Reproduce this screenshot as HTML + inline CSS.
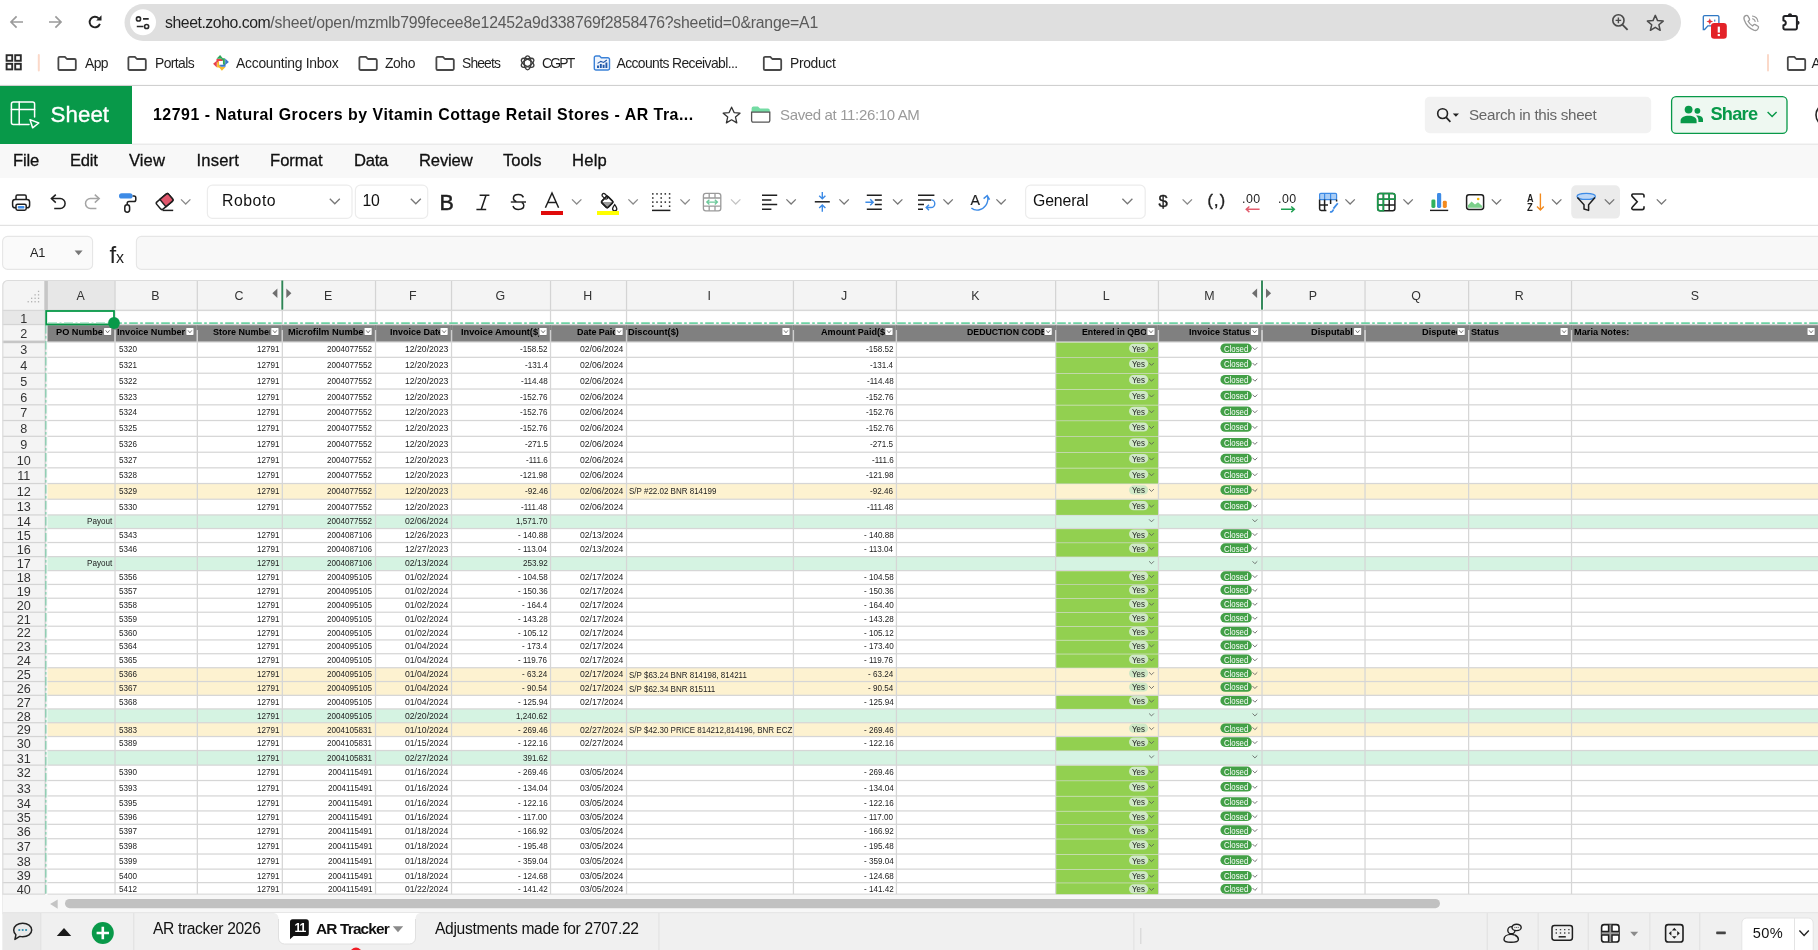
<!DOCTYPE html>
<html><head><meta charset="utf-8"><title>12791 - Natural Grocers by Vitamin Cottage Retail Stores - AR Tracker</title>
<style>
html,body{margin:0;padding:0;background:#fff}
body{width:1818px;height:950px;overflow:hidden;position:relative;font-family:"Liberation Sans",sans-serif}
.abs{position:absolute}
.t{position:absolute;white-space:pre;line-height:20px;display:block}
.clip{position:absolute;overflow:hidden}
svg{display:block}
</style></head><body>
<svg class="abs" style="left:0;top:0" width="1818" height="950" viewBox="0 0 1818 950"><rect x="47.5" y="310.0" width="1770.5" height="584.2" fill="#fff"/><path d="M7.5 280.2 h1818.0 v614.0 h-1823.0 v-609.0 a5 5 0 0 1 5 -5z" fill="#f4f4f4"/><rect x="47.5" y="310" width="1818" height="584.2" fill="#fff"/><rect x="47.5" y="280.2" width="67.5" height="29.8" fill="#e7e7e7"/><rect x="2.5" y="310" width="42.5" height="14.5" fill="#e7e7e7"/><rect x="47.5" y="483.50" width="1818" height="15.70" fill="#fdf2d0"/><rect x="47.5" y="514.90" width="1818" height="13.60" fill="#d5f3e2"/><rect x="47.5" y="556.60" width="1818" height="14.00" fill="#d5f3e2"/><rect x="47.5" y="667.70" width="1818" height="13.80" fill="#fdf2d0"/><rect x="47.5" y="681.50" width="1818" height="13.80" fill="#fdf2d0"/><rect x="47.5" y="708.90" width="1818" height="13.80" fill="#d5f3e2"/><rect x="47.5" y="722.70" width="1818" height="13.80" fill="#fdf2d0"/><rect x="47.5" y="750.50" width="1818" height="14.60" fill="#d5f3e2"/><rect x="47.5" y="325.10" width="1818" height="16.90" fill="#808080"/><rect x="47.5" y="309.80" width="1818" height="1.25" fill="#d6d6d6"/><rect x="47.5" y="323.90" width="1818" height="1.25" fill="#d6d6d6"/><rect x="47.5" y="341.40" width="1818" height="1.25" fill="#d6d6d6"/><rect x="47.5" y="356.70" width="1818" height="1.25" fill="#d6d6d6"/><rect x="47.5" y="372.60" width="1818" height="1.25" fill="#d6d6d6"/><rect x="47.5" y="388.40" width="1818" height="1.25" fill="#d6d6d6"/><rect x="47.5" y="404.20" width="1818" height="1.25" fill="#d6d6d6"/><rect x="47.5" y="419.90" width="1818" height="1.25" fill="#d6d6d6"/><rect x="47.5" y="435.70" width="1818" height="1.25" fill="#d6d6d6"/><rect x="47.5" y="451.60" width="1818" height="1.25" fill="#d6d6d6"/><rect x="47.5" y="467.20" width="1818" height="1.25" fill="#d6d6d6"/><rect x="47.5" y="482.90" width="1818" height="1.25" fill="#d6d6d6"/><rect x="47.5" y="498.60" width="1818" height="1.25" fill="#d6d6d6"/><rect x="47.5" y="514.30" width="1818" height="1.25" fill="#d6d6d6"/><rect x="47.5" y="527.90" width="1818" height="1.25" fill="#d6d6d6"/><rect x="47.5" y="541.90" width="1818" height="1.25" fill="#d6d6d6"/><rect x="47.5" y="556.00" width="1818" height="1.25" fill="#d6d6d6"/><rect x="47.5" y="570.00" width="1818" height="1.25" fill="#d6d6d6"/><rect x="47.5" y="583.80" width="1818" height="1.25" fill="#d6d6d6"/><rect x="47.5" y="597.60" width="1818" height="1.25" fill="#d6d6d6"/><rect x="47.5" y="611.60" width="1818" height="1.25" fill="#d6d6d6"/><rect x="47.5" y="625.60" width="1818" height="1.25" fill="#d6d6d6"/><rect x="47.5" y="639.30" width="1818" height="1.25" fill="#d6d6d6"/><rect x="47.5" y="653.10" width="1818" height="1.25" fill="#d6d6d6"/><rect x="47.5" y="667.10" width="1818" height="1.25" fill="#d6d6d6"/><rect x="47.5" y="680.90" width="1818" height="1.25" fill="#d6d6d6"/><rect x="47.5" y="694.70" width="1818" height="1.25" fill="#d6d6d6"/><rect x="47.5" y="708.30" width="1818" height="1.25" fill="#d6d6d6"/><rect x="47.5" y="722.10" width="1818" height="1.25" fill="#d6d6d6"/><rect x="47.5" y="735.90" width="1818" height="1.25" fill="#d6d6d6"/><rect x="47.5" y="749.90" width="1818" height="1.25" fill="#d6d6d6"/><rect x="47.5" y="764.50" width="1818" height="1.25" fill="#d6d6d6"/><rect x="47.5" y="779.90" width="1818" height="1.25" fill="#d6d6d6"/><rect x="47.5" y="795.30" width="1818" height="1.25" fill="#d6d6d6"/><rect x="47.5" y="810.30" width="1818" height="1.25" fill="#d6d6d6"/><rect x="47.5" y="823.70" width="1818" height="1.25" fill="#d6d6d6"/><rect x="47.5" y="838.10" width="1818" height="1.25" fill="#d6d6d6"/><rect x="47.5" y="853.40" width="1818" height="1.25" fill="#d6d6d6"/><rect x="47.5" y="868.50" width="1818" height="1.25" fill="#d6d6d6"/><rect x="47.5" y="882.00" width="1818" height="1.25" fill="#d6d6d6"/><rect x="47.5" y="893.60" width="1818" height="1.25" fill="#d6d6d6"/><rect x="114.40" y="310" width="1.25" height="584.2" fill="#d6d6d6"/><rect x="196.70" y="310" width="1.25" height="584.2" fill="#d6d6d6"/><rect x="281.70" y="310" width="1.25" height="584.2" fill="#d6d6d6"/><rect x="374.90" y="310" width="1.25" height="584.2" fill="#d6d6d6"/><rect x="450.90" y="310" width="1.25" height="584.2" fill="#d6d6d6"/><rect x="549.90" y="310" width="1.25" height="584.2" fill="#d6d6d6"/><rect x="625.90" y="310" width="1.25" height="584.2" fill="#d6d6d6"/><rect x="792.80" y="310" width="1.25" height="584.2" fill="#d6d6d6"/><rect x="895.80" y="310" width="1.25" height="584.2" fill="#d6d6d6"/><rect x="1055.00" y="310" width="1.25" height="584.2" fill="#d6d6d6"/><rect x="1157.80" y="310" width="1.25" height="584.2" fill="#d6d6d6"/><rect x="1261.40" y="310" width="1.25" height="584.2" fill="#d6d6d6"/><rect x="1364.40" y="310" width="1.25" height="584.2" fill="#d6d6d6"/><rect x="1468.00" y="310" width="1.25" height="584.2" fill="#d6d6d6"/><rect x="1570.90" y="310" width="1.25" height="584.2" fill="#d6d6d6"/><rect x="114.40" y="325.10" width="1.25" height="5.00" fill="#808080"/><rect x="114.40" y="330.10" width="1.25" height="11.90" fill="#cfcfcf"/><rect x="196.70" y="325.10" width="1.25" height="5.00" fill="#808080"/><rect x="196.70" y="330.10" width="1.25" height="11.90" fill="#cfcfcf"/><rect x="281.70" y="325.10" width="1.25" height="5.00" fill="#808080"/><rect x="281.70" y="330.10" width="1.25" height="11.90" fill="#cfcfcf"/><rect x="374.90" y="325.10" width="1.25" height="5.00" fill="#808080"/><rect x="374.90" y="330.10" width="1.25" height="11.90" fill="#cfcfcf"/><rect x="450.90" y="325.10" width="1.25" height="5.00" fill="#808080"/><rect x="450.90" y="330.10" width="1.25" height="11.90" fill="#cfcfcf"/><rect x="549.90" y="325.10" width="1.25" height="5.00" fill="#808080"/><rect x="549.90" y="330.10" width="1.25" height="11.90" fill="#cfcfcf"/><rect x="625.90" y="325.10" width="1.25" height="5.00" fill="#808080"/><rect x="625.90" y="330.10" width="1.25" height="11.90" fill="#cfcfcf"/><rect x="792.80" y="325.10" width="1.25" height="5.00" fill="#808080"/><rect x="792.80" y="330.10" width="1.25" height="11.90" fill="#cfcfcf"/><rect x="895.80" y="325.10" width="1.25" height="5.00" fill="#808080"/><rect x="895.80" y="330.10" width="1.25" height="11.90" fill="#cfcfcf"/><rect x="1055.00" y="325.10" width="1.25" height="5.00" fill="#808080"/><rect x="1055.00" y="330.10" width="1.25" height="11.90" fill="#cfcfcf"/><rect x="1157.80" y="325.10" width="1.25" height="5.00" fill="#808080"/><rect x="1157.80" y="330.10" width="1.25" height="11.90" fill="#cfcfcf"/><rect x="1261.40" y="325.10" width="1.25" height="5.00" fill="#808080"/><rect x="1261.40" y="330.10" width="1.25" height="11.90" fill="#cfcfcf"/><rect x="1364.40" y="325.10" width="1.25" height="5.00" fill="#808080"/><rect x="1364.40" y="330.10" width="1.25" height="11.90" fill="#cfcfcf"/><rect x="1468.00" y="325.10" width="1.25" height="5.00" fill="#808080"/><rect x="1468.00" y="330.10" width="1.25" height="11.90" fill="#cfcfcf"/><rect x="1570.90" y="325.10" width="1.25" height="5.00" fill="#808080"/><rect x="1570.90" y="330.10" width="1.25" height="11.90" fill="#cfcfcf"/><rect x="1056.20" y="342.60" width="101.80" height="14.70" fill="#92d050"/><rect x="1056.20" y="357.90" width="101.80" height="15.30" fill="#92d050"/><rect x="1056.20" y="373.80" width="101.80" height="15.20" fill="#92d050"/><rect x="1056.20" y="389.60" width="101.80" height="15.20" fill="#92d050"/><rect x="1056.20" y="405.40" width="101.80" height="15.10" fill="#92d050"/><rect x="1056.20" y="421.10" width="101.80" height="15.20" fill="#92d050"/><rect x="1056.20" y="436.90" width="101.80" height="15.30" fill="#92d050"/><rect x="1056.20" y="452.80" width="101.80" height="15.00" fill="#92d050"/><rect x="1056.20" y="468.40" width="101.80" height="15.10" fill="#92d050"/><rect x="1056.20" y="499.80" width="101.80" height="15.10" fill="#92d050"/><rect x="1056.20" y="529.10" width="101.80" height="13.40" fill="#92d050"/><rect x="1056.20" y="543.10" width="101.80" height="13.50" fill="#92d050"/><rect x="1056.20" y="571.20" width="101.80" height="13.20" fill="#92d050"/><rect x="1056.20" y="585.00" width="101.80" height="13.20" fill="#92d050"/><rect x="1056.20" y="598.80" width="101.80" height="13.40" fill="#92d050"/><rect x="1056.20" y="612.80" width="101.80" height="13.40" fill="#92d050"/><rect x="1056.20" y="626.80" width="101.80" height="13.10" fill="#92d050"/><rect x="1056.20" y="640.50" width="101.80" height="13.20" fill="#92d050"/><rect x="1056.20" y="654.30" width="101.80" height="13.40" fill="#92d050"/><rect x="1056.20" y="695.90" width="101.80" height="13.00" fill="#92d050"/><rect x="1056.20" y="737.10" width="101.80" height="13.40" fill="#92d050"/><rect x="1056.20" y="765.70" width="101.80" height="14.80" fill="#92d050"/><rect x="1056.20" y="781.10" width="101.80" height="14.80" fill="#92d050"/><rect x="1056.20" y="796.50" width="101.80" height="14.40" fill="#92d050"/><rect x="1056.20" y="811.50" width="101.80" height="12.80" fill="#92d050"/><rect x="1056.20" y="824.90" width="101.80" height="13.80" fill="#92d050"/><rect x="1056.20" y="839.30" width="101.80" height="14.70" fill="#92d050"/><rect x="1056.20" y="854.60" width="101.80" height="14.50" fill="#92d050"/><rect x="1056.20" y="869.70" width="101.80" height="12.90" fill="#92d050"/><rect x="1056.20" y="883.20" width="101.80" height="11.00" fill="#92d050"/><rect x="2.5" y="323.90" width="42.5" height="1.25" fill="#d4d4d4"/><rect x="2.5" y="341.40" width="42.5" height="1.25" fill="#d4d4d4"/><rect x="2.5" y="356.70" width="42.5" height="1.25" fill="#d4d4d4"/><rect x="2.5" y="372.60" width="42.5" height="1.25" fill="#d4d4d4"/><rect x="2.5" y="388.40" width="42.5" height="1.25" fill="#d4d4d4"/><rect x="2.5" y="404.20" width="42.5" height="1.25" fill="#d4d4d4"/><rect x="2.5" y="419.90" width="42.5" height="1.25" fill="#d4d4d4"/><rect x="2.5" y="435.70" width="42.5" height="1.25" fill="#d4d4d4"/><rect x="2.5" y="451.60" width="42.5" height="1.25" fill="#d4d4d4"/><rect x="2.5" y="467.20" width="42.5" height="1.25" fill="#d4d4d4"/><rect x="2.5" y="482.90" width="42.5" height="1.25" fill="#d4d4d4"/><rect x="2.5" y="498.60" width="42.5" height="1.25" fill="#d4d4d4"/><rect x="2.5" y="514.30" width="42.5" height="1.25" fill="#d4d4d4"/><rect x="2.5" y="527.90" width="42.5" height="1.25" fill="#d4d4d4"/><rect x="2.5" y="541.90" width="42.5" height="1.25" fill="#d4d4d4"/><rect x="2.5" y="556.00" width="42.5" height="1.25" fill="#d4d4d4"/><rect x="2.5" y="570.00" width="42.5" height="1.25" fill="#d4d4d4"/><rect x="2.5" y="583.80" width="42.5" height="1.25" fill="#d4d4d4"/><rect x="2.5" y="597.60" width="42.5" height="1.25" fill="#d4d4d4"/><rect x="2.5" y="611.60" width="42.5" height="1.25" fill="#d4d4d4"/><rect x="2.5" y="625.60" width="42.5" height="1.25" fill="#d4d4d4"/><rect x="2.5" y="639.30" width="42.5" height="1.25" fill="#d4d4d4"/><rect x="2.5" y="653.10" width="42.5" height="1.25" fill="#d4d4d4"/><rect x="2.5" y="667.10" width="42.5" height="1.25" fill="#d4d4d4"/><rect x="2.5" y="680.90" width="42.5" height="1.25" fill="#d4d4d4"/><rect x="2.5" y="694.70" width="42.5" height="1.25" fill="#d4d4d4"/><rect x="2.5" y="708.30" width="42.5" height="1.25" fill="#d4d4d4"/><rect x="2.5" y="722.10" width="42.5" height="1.25" fill="#d4d4d4"/><rect x="2.5" y="735.90" width="42.5" height="1.25" fill="#d4d4d4"/><rect x="2.5" y="749.90" width="42.5" height="1.25" fill="#d4d4d4"/><rect x="2.5" y="764.50" width="42.5" height="1.25" fill="#d4d4d4"/><rect x="2.5" y="779.90" width="42.5" height="1.25" fill="#d4d4d4"/><rect x="2.5" y="795.30" width="42.5" height="1.25" fill="#d4d4d4"/><rect x="2.5" y="810.30" width="42.5" height="1.25" fill="#d4d4d4"/><rect x="2.5" y="823.70" width="42.5" height="1.25" fill="#d4d4d4"/><rect x="2.5" y="838.10" width="42.5" height="1.25" fill="#d4d4d4"/><rect x="2.5" y="853.40" width="42.5" height="1.25" fill="#d4d4d4"/><rect x="2.5" y="868.50" width="42.5" height="1.25" fill="#d4d4d4"/><rect x="2.5" y="882.00" width="42.5" height="1.25" fill="#d4d4d4"/><rect x="2.5" y="893.60" width="42.5" height="1.25" fill="#d4d4d4"/><rect x="114.40" y="280.2" width="1.25" height="29.8" fill="#d4d4d4"/><rect x="196.70" y="280.2" width="1.25" height="29.8" fill="#d4d4d4"/><rect x="281.70" y="280.2" width="1.25" height="29.8" fill="#d4d4d4"/><rect x="374.90" y="280.2" width="1.25" height="29.8" fill="#d4d4d4"/><rect x="450.90" y="280.2" width="1.25" height="29.8" fill="#d4d4d4"/><rect x="549.90" y="280.2" width="1.25" height="29.8" fill="#d4d4d4"/><rect x="625.90" y="280.2" width="1.25" height="29.8" fill="#d4d4d4"/><rect x="792.80" y="280.2" width="1.25" height="29.8" fill="#d4d4d4"/><rect x="895.80" y="280.2" width="1.25" height="29.8" fill="#d4d4d4"/><rect x="1055.00" y="280.2" width="1.25" height="29.8" fill="#d4d4d4"/><rect x="1157.80" y="280.2" width="1.25" height="29.8" fill="#d4d4d4"/><rect x="1261.40" y="280.2" width="1.25" height="29.8" fill="#d4d4d4"/><rect x="1364.40" y="280.2" width="1.25" height="29.8" fill="#d4d4d4"/><rect x="1468.00" y="280.2" width="1.25" height="29.8" fill="#d4d4d4"/><rect x="1570.90" y="280.2" width="1.25" height="29.8" fill="#d4d4d4"/><rect x="2.5" y="309.8" width="1818" height="1.25" fill="#d8d8d8"/><rect x="44.3" y="280.2" width="3.6" height="29.8" fill="#c6c6c6"/><rect x="44.6" y="310" width="1.25" height="584.2" fill="#d0d0d0"/><rect x="2.5" y="340.6" width="42.5" height="2.6" fill="#c6c6c6"/><path d="M2.8 894.2 V285.5 a5 5 0 0 1 5 -5 H1818" fill="none" stroke="#dcdcdc" stroke-width="1.2"/><rect x="2.2" y="894.20" width="1.2" height="20" fill="#dcdcdc"/><rect x="280.40" y="281.0" width="3.8" height="29.0" fill="#fafafa"/><rect x="281.35" y="280.5" width="1.9" height="29.2" fill="#2e8555"/><path d="M277.40 288.4 l-5.1 4.75 l5.1 4.75z" fill="#6e6e6e"/><path d="M286.30 288.4 l5.1 4.75 l-5.1 4.75z" fill="#6e6e6e"/><rect x="1260.10" y="281.0" width="3.8" height="29.0" fill="#fafafa"/><rect x="1261.05" y="280.5" width="1.9" height="29.2" fill="#2e8555"/><path d="M1257.10 288.4 l-5.1 4.75 l5.1 4.75z" fill="#6e6e6e"/><path d="M1266.00 288.4 l5.1 4.75 l-5.1 4.75z" fill="#6e6e6e"/><rect x="37.90" y="301.10" width="1.3" height="1.3" fill="#b0b0b0"/><rect x="34.45" y="301.10" width="1.3" height="1.3" fill="#b0b0b0"/><rect x="31.00" y="301.10" width="1.3" height="1.3" fill="#b0b0b0"/><rect x="27.55" y="301.10" width="1.3" height="1.3" fill="#b0b0b0"/><rect x="37.90" y="297.65" width="1.3" height="1.3" fill="#b0b0b0"/><rect x="34.45" y="297.65" width="1.3" height="1.3" fill="#b0b0b0"/><rect x="31.00" y="297.65" width="1.3" height="1.3" fill="#b0b0b0"/><rect x="37.90" y="294.20" width="1.3" height="1.3" fill="#b0b0b0"/><rect x="34.45" y="294.20" width="1.3" height="1.3" fill="#b0b0b0"/><rect x="37.90" y="290.75" width="1.3" height="1.3" fill="#b0b0b0"/><line x1="113.2" y1="323.1" x2="1818" y2="323.1" stroke="#6fd3a5" stroke-width="1.7" stroke-dasharray="8.6 2.4 2.6 2.4"/><line x1="45.9" y1="325" x2="45.9" y2="894.2" stroke="#55c595" stroke-width="0.85" stroke-dasharray="8.6 2.4 2.6 2.4"/><rect x="46.2" y="311.0" width="67.8" height="13.4" fill="none" stroke="#089949" stroke-width="1.8"/><line x1="48" y1="322.6" x2="108" y2="322.6" stroke="#7fd6ad" stroke-width="0.6" stroke-dasharray="9 2.5 2 2.5"/><circle cx="114" cy="323" r="5.9" fill="#089949"/><rect x="1129.00" y="343.65" width="19.2" height="9.2" rx="4.6" fill="#cfe8c6"/><rect x="1220.40" y="343.45" width="31.4" height="9.6" rx="4.8" fill="#43a047"/><path d="M1149.10 347.35 l2.4 2.4 l2.4 -2.4" fill="none" stroke="#555" stroke-width="0.8"/><path d="M1252.50 347.35 l2.4 2.4 l2.4 -2.4" fill="none" stroke="#555" stroke-width="0.8"/><rect x="1129.00" y="359.25" width="19.2" height="9.2" rx="4.6" fill="#cfe8c6"/><rect x="1220.40" y="359.05" width="31.4" height="9.6" rx="4.8" fill="#43a047"/><path d="M1149.10 362.95 l2.4 2.4 l2.4 -2.4" fill="none" stroke="#555" stroke-width="0.8"/><path d="M1252.50 362.95 l2.4 2.4 l2.4 -2.4" fill="none" stroke="#555" stroke-width="0.8"/><rect x="1129.00" y="375.10" width="19.2" height="9.2" rx="4.6" fill="#cfe8c6"/><rect x="1220.40" y="374.90" width="31.4" height="9.6" rx="4.8" fill="#43a047"/><path d="M1149.10 378.80 l2.4 2.4 l2.4 -2.4" fill="none" stroke="#555" stroke-width="0.8"/><path d="M1252.50 378.80 l2.4 2.4 l2.4 -2.4" fill="none" stroke="#555" stroke-width="0.8"/><rect x="1129.00" y="390.90" width="19.2" height="9.2" rx="4.6" fill="#cfe8c6"/><rect x="1220.40" y="390.70" width="31.4" height="9.6" rx="4.8" fill="#43a047"/><path d="M1149.10 394.60 l2.4 2.4 l2.4 -2.4" fill="none" stroke="#555" stroke-width="0.8"/><path d="M1252.50 394.60 l2.4 2.4 l2.4 -2.4" fill="none" stroke="#555" stroke-width="0.8"/><rect x="1129.00" y="406.65" width="19.2" height="9.2" rx="4.6" fill="#cfe8c6"/><rect x="1220.40" y="406.45" width="31.4" height="9.6" rx="4.8" fill="#43a047"/><path d="M1149.10 410.35 l2.4 2.4 l2.4 -2.4" fill="none" stroke="#555" stroke-width="0.8"/><path d="M1252.50 410.35 l2.4 2.4 l2.4 -2.4" fill="none" stroke="#555" stroke-width="0.8"/><rect x="1129.00" y="422.40" width="19.2" height="9.2" rx="4.6" fill="#cfe8c6"/><rect x="1220.40" y="422.20" width="31.4" height="9.6" rx="4.8" fill="#43a047"/><path d="M1149.10 426.10 l2.4 2.4 l2.4 -2.4" fill="none" stroke="#555" stroke-width="0.8"/><path d="M1252.50 426.10 l2.4 2.4 l2.4 -2.4" fill="none" stroke="#555" stroke-width="0.8"/><rect x="1129.00" y="438.25" width="19.2" height="9.2" rx="4.6" fill="#cfe8c6"/><rect x="1220.40" y="438.05" width="31.4" height="9.6" rx="4.8" fill="#43a047"/><path d="M1149.10 441.95 l2.4 2.4 l2.4 -2.4" fill="none" stroke="#555" stroke-width="0.8"/><path d="M1252.50 441.95 l2.4 2.4 l2.4 -2.4" fill="none" stroke="#555" stroke-width="0.8"/><rect x="1129.00" y="454.00" width="19.2" height="9.2" rx="4.6" fill="#cfe8c6"/><rect x="1220.40" y="453.80" width="31.4" height="9.6" rx="4.8" fill="#43a047"/><path d="M1149.10 457.70 l2.4 2.4 l2.4 -2.4" fill="none" stroke="#555" stroke-width="0.8"/><path d="M1252.50 457.70 l2.4 2.4 l2.4 -2.4" fill="none" stroke="#555" stroke-width="0.8"/><rect x="1129.00" y="469.65" width="19.2" height="9.2" rx="4.6" fill="#cfe8c6"/><rect x="1220.40" y="469.45" width="31.4" height="9.6" rx="4.8" fill="#43a047"/><path d="M1149.10 473.35 l2.4 2.4 l2.4 -2.4" fill="none" stroke="#555" stroke-width="0.8"/><path d="M1252.50 473.35 l2.4 2.4 l2.4 -2.4" fill="none" stroke="#555" stroke-width="0.8"/><rect x="1129.00" y="501.05" width="19.2" height="9.2" rx="4.6" fill="#cfe8c6"/><rect x="1220.40" y="500.85" width="31.4" height="9.6" rx="4.8" fill="#43a047"/><path d="M1149.10 504.75 l2.4 2.4 l2.4 -2.4" fill="none" stroke="#555" stroke-width="0.8"/><path d="M1252.50 504.75 l2.4 2.4 l2.4 -2.4" fill="none" stroke="#555" stroke-width="0.8"/><rect x="1129.00" y="485.35" width="19.2" height="9.2" rx="4.6" fill="#cfe8c6"/><rect x="1220.40" y="485.15" width="31.4" height="9.6" rx="4.8" fill="#43a047"/><path d="M1149.10 489.05 l2.4 2.4 l2.4 -2.4" fill="none" stroke="#555" stroke-width="0.8"/><path d="M1252.50 489.05 l2.4 2.4 l2.4 -2.4" fill="none" stroke="#555" stroke-width="0.8"/><path d="M1149.10 519.40 l2.4 2.4 l2.4 -2.4" fill="none" stroke="#555" stroke-width="0.8"/><path d="M1252.50 519.40 l2.4 2.4 l2.4 -2.4" fill="none" stroke="#555" stroke-width="0.8"/><rect x="1129.00" y="529.50" width="19.2" height="9.2" rx="4.6" fill="#cfe8c6"/><rect x="1220.40" y="529.30" width="31.4" height="9.6" rx="4.8" fill="#43a047"/><path d="M1149.10 533.20 l2.4 2.4 l2.4 -2.4" fill="none" stroke="#555" stroke-width="0.8"/><path d="M1252.50 533.20 l2.4 2.4 l2.4 -2.4" fill="none" stroke="#555" stroke-width="0.8"/><rect x="1129.00" y="543.55" width="19.2" height="9.2" rx="4.6" fill="#cfe8c6"/><rect x="1220.40" y="543.35" width="31.4" height="9.6" rx="4.8" fill="#43a047"/><path d="M1149.10 547.25 l2.4 2.4 l2.4 -2.4" fill="none" stroke="#555" stroke-width="0.8"/><path d="M1252.50 547.25 l2.4 2.4 l2.4 -2.4" fill="none" stroke="#555" stroke-width="0.8"/><path d="M1149.10 561.30 l2.4 2.4 l2.4 -2.4" fill="none" stroke="#555" stroke-width="0.8"/><path d="M1252.50 561.30 l2.4 2.4 l2.4 -2.4" fill="none" stroke="#555" stroke-width="0.8"/><rect x="1129.00" y="571.50" width="19.2" height="9.2" rx="4.6" fill="#cfe8c6"/><rect x="1220.40" y="571.30" width="31.4" height="9.6" rx="4.8" fill="#43a047"/><path d="M1149.10 575.20 l2.4 2.4 l2.4 -2.4" fill="none" stroke="#555" stroke-width="0.8"/><path d="M1252.50 575.20 l2.4 2.4 l2.4 -2.4" fill="none" stroke="#555" stroke-width="0.8"/><rect x="1129.00" y="585.30" width="19.2" height="9.2" rx="4.6" fill="#cfe8c6"/><rect x="1220.40" y="585.10" width="31.4" height="9.6" rx="4.8" fill="#43a047"/><path d="M1149.10 589.00 l2.4 2.4 l2.4 -2.4" fill="none" stroke="#555" stroke-width="0.8"/><path d="M1252.50 589.00 l2.4 2.4 l2.4 -2.4" fill="none" stroke="#555" stroke-width="0.8"/><rect x="1129.00" y="599.20" width="19.2" height="9.2" rx="4.6" fill="#cfe8c6"/><rect x="1220.40" y="599.00" width="31.4" height="9.6" rx="4.8" fill="#43a047"/><path d="M1149.10 602.90 l2.4 2.4 l2.4 -2.4" fill="none" stroke="#555" stroke-width="0.8"/><path d="M1252.50 602.90 l2.4 2.4 l2.4 -2.4" fill="none" stroke="#555" stroke-width="0.8"/><rect x="1129.00" y="613.20" width="19.2" height="9.2" rx="4.6" fill="#cfe8c6"/><rect x="1220.40" y="613.00" width="31.4" height="9.6" rx="4.8" fill="#43a047"/><path d="M1149.10 616.90 l2.4 2.4 l2.4 -2.4" fill="none" stroke="#555" stroke-width="0.8"/><path d="M1252.50 616.90 l2.4 2.4 l2.4 -2.4" fill="none" stroke="#555" stroke-width="0.8"/><rect x="1129.00" y="627.05" width="19.2" height="9.2" rx="4.6" fill="#cfe8c6"/><rect x="1220.40" y="626.85" width="31.4" height="9.6" rx="4.8" fill="#43a047"/><path d="M1149.10 630.75 l2.4 2.4 l2.4 -2.4" fill="none" stroke="#555" stroke-width="0.8"/><path d="M1252.50 630.75 l2.4 2.4 l2.4 -2.4" fill="none" stroke="#555" stroke-width="0.8"/><rect x="1129.00" y="640.80" width="19.2" height="9.2" rx="4.6" fill="#cfe8c6"/><rect x="1220.40" y="640.60" width="31.4" height="9.6" rx="4.8" fill="#43a047"/><path d="M1149.10 644.50 l2.4 2.4 l2.4 -2.4" fill="none" stroke="#555" stroke-width="0.8"/><path d="M1252.50 644.50 l2.4 2.4 l2.4 -2.4" fill="none" stroke="#555" stroke-width="0.8"/><rect x="1129.00" y="654.70" width="19.2" height="9.2" rx="4.6" fill="#cfe8c6"/><rect x="1220.40" y="654.50" width="31.4" height="9.6" rx="4.8" fill="#43a047"/><path d="M1149.10 658.40 l2.4 2.4 l2.4 -2.4" fill="none" stroke="#555" stroke-width="0.8"/><path d="M1252.50 658.40 l2.4 2.4 l2.4 -2.4" fill="none" stroke="#555" stroke-width="0.8"/><rect x="1129.00" y="668.60" width="19.2" height="9.2" rx="4.6" fill="#cfe8c6"/><rect x="1220.40" y="668.40" width="31.4" height="9.6" rx="4.8" fill="#43a047"/><path d="M1149.10 672.30 l2.4 2.4 l2.4 -2.4" fill="none" stroke="#555" stroke-width="0.8"/><path d="M1252.50 672.30 l2.4 2.4 l2.4 -2.4" fill="none" stroke="#555" stroke-width="0.8"/><rect x="1129.00" y="682.40" width="19.2" height="9.2" rx="4.6" fill="#cfe8c6"/><rect x="1220.40" y="682.20" width="31.4" height="9.6" rx="4.8" fill="#43a047"/><path d="M1149.10 686.10 l2.4 2.4 l2.4 -2.4" fill="none" stroke="#555" stroke-width="0.8"/><path d="M1252.50 686.10 l2.4 2.4 l2.4 -2.4" fill="none" stroke="#555" stroke-width="0.8"/><rect x="1129.00" y="696.10" width="19.2" height="9.2" rx="4.6" fill="#cfe8c6"/><rect x="1220.40" y="695.90" width="31.4" height="9.6" rx="4.8" fill="#43a047"/><path d="M1149.10 699.80 l2.4 2.4 l2.4 -2.4" fill="none" stroke="#555" stroke-width="0.8"/><path d="M1252.50 699.80 l2.4 2.4 l2.4 -2.4" fill="none" stroke="#555" stroke-width="0.8"/><path d="M1149.10 713.50 l2.4 2.4 l2.4 -2.4" fill="none" stroke="#555" stroke-width="0.8"/><path d="M1252.50 713.50 l2.4 2.4 l2.4 -2.4" fill="none" stroke="#555" stroke-width="0.8"/><rect x="1129.00" y="723.60" width="19.2" height="9.2" rx="4.6" fill="#cfe8c6"/><rect x="1220.40" y="723.40" width="31.4" height="9.6" rx="4.8" fill="#43a047"/><path d="M1149.10 727.30 l2.4 2.4 l2.4 -2.4" fill="none" stroke="#555" stroke-width="0.8"/><path d="M1252.50 727.30 l2.4 2.4 l2.4 -2.4" fill="none" stroke="#555" stroke-width="0.8"/><rect x="1129.00" y="737.50" width="19.2" height="9.2" rx="4.6" fill="#cfe8c6"/><rect x="1220.40" y="737.30" width="31.4" height="9.6" rx="4.8" fill="#43a047"/><path d="M1149.10 741.20 l2.4 2.4 l2.4 -2.4" fill="none" stroke="#555" stroke-width="0.8"/><path d="M1252.50 741.20 l2.4 2.4 l2.4 -2.4" fill="none" stroke="#555" stroke-width="0.8"/><path d="M1149.10 755.50 l2.4 2.4 l2.4 -2.4" fill="none" stroke="#555" stroke-width="0.8"/><path d="M1252.50 755.50 l2.4 2.4 l2.4 -2.4" fill="none" stroke="#555" stroke-width="0.8"/><rect x="1129.00" y="766.80" width="19.2" height="9.2" rx="4.6" fill="#cfe8c6"/><rect x="1220.40" y="766.60" width="31.4" height="9.6" rx="4.8" fill="#43a047"/><path d="M1149.10 770.50 l2.4 2.4 l2.4 -2.4" fill="none" stroke="#555" stroke-width="0.8"/><path d="M1252.50 770.50 l2.4 2.4 l2.4 -2.4" fill="none" stroke="#555" stroke-width="0.8"/><rect x="1129.00" y="782.20" width="19.2" height="9.2" rx="4.6" fill="#cfe8c6"/><rect x="1220.40" y="782.00" width="31.4" height="9.6" rx="4.8" fill="#43a047"/><path d="M1149.10 785.90 l2.4 2.4 l2.4 -2.4" fill="none" stroke="#555" stroke-width="0.8"/><path d="M1252.50 785.90 l2.4 2.4 l2.4 -2.4" fill="none" stroke="#555" stroke-width="0.8"/><rect x="1129.00" y="797.40" width="19.2" height="9.2" rx="4.6" fill="#cfe8c6"/><rect x="1220.40" y="797.20" width="31.4" height="9.6" rx="4.8" fill="#43a047"/><path d="M1149.10 801.10 l2.4 2.4 l2.4 -2.4" fill="none" stroke="#555" stroke-width="0.8"/><path d="M1252.50 801.10 l2.4 2.4 l2.4 -2.4" fill="none" stroke="#555" stroke-width="0.8"/><rect x="1129.00" y="811.60" width="19.2" height="9.2" rx="4.6" fill="#cfe8c6"/><rect x="1220.40" y="811.40" width="31.4" height="9.6" rx="4.8" fill="#43a047"/><path d="M1149.10 815.30 l2.4 2.4 l2.4 -2.4" fill="none" stroke="#555" stroke-width="0.8"/><path d="M1252.50 815.30 l2.4 2.4 l2.4 -2.4" fill="none" stroke="#555" stroke-width="0.8"/><rect x="1129.00" y="825.50" width="19.2" height="9.2" rx="4.6" fill="#cfe8c6"/><rect x="1220.40" y="825.30" width="31.4" height="9.6" rx="4.8" fill="#43a047"/><path d="M1149.10 829.20 l2.4 2.4 l2.4 -2.4" fill="none" stroke="#555" stroke-width="0.8"/><path d="M1252.50 829.20 l2.4 2.4 l2.4 -2.4" fill="none" stroke="#555" stroke-width="0.8"/><rect x="1129.00" y="840.35" width="19.2" height="9.2" rx="4.6" fill="#cfe8c6"/><rect x="1220.40" y="840.15" width="31.4" height="9.6" rx="4.8" fill="#43a047"/><path d="M1149.10 844.05 l2.4 2.4 l2.4 -2.4" fill="none" stroke="#555" stroke-width="0.8"/><path d="M1252.50 844.05 l2.4 2.4 l2.4 -2.4" fill="none" stroke="#555" stroke-width="0.8"/><rect x="1129.00" y="855.55" width="19.2" height="9.2" rx="4.6" fill="#cfe8c6"/><rect x="1220.40" y="855.35" width="31.4" height="9.6" rx="4.8" fill="#43a047"/><path d="M1149.10 859.25 l2.4 2.4 l2.4 -2.4" fill="none" stroke="#555" stroke-width="0.8"/><path d="M1252.50 859.25 l2.4 2.4 l2.4 -2.4" fill="none" stroke="#555" stroke-width="0.8"/><rect x="1129.00" y="871.15" width="19.2" height="9.2" rx="4.6" fill="#cfe8c6"/><rect x="1220.40" y="870.95" width="31.4" height="9.6" rx="4.8" fill="#43a047"/><path d="M1149.10 874.85 l2.4 2.4 l2.4 -2.4" fill="none" stroke="#555" stroke-width="0.8"/><path d="M1252.50 874.85 l2.4 2.4 l2.4 -2.4" fill="none" stroke="#555" stroke-width="0.8"/><rect x="1129.00" y="884.30" width="19.2" height="9.2" rx="4.6" fill="#cfe8c6"/><rect x="1220.40" y="884.10" width="31.4" height="9.6" rx="4.8" fill="#43a047"/><path d="M1149.10 888.00 l2.4 2.4 l2.4 -2.4" fill="none" stroke="#555" stroke-width="0.8"/><path d="M1252.50 888.00 l2.4 2.4 l2.4 -2.4" fill="none" stroke="#555" stroke-width="0.8"/></svg>
<div class="abs" style="left:0;top:0;width:1818px;height:950px;will-change:transform"><span class="t" style="left:76.41px;top:285.90px;font-size:12.40px;color:#333;">A</span>
<span class="t" style="left:151.31px;top:285.90px;font-size:12.40px;color:#333;">B</span>
<span class="t" style="left:234.62px;top:285.90px;font-size:12.40px;color:#333;">C</span>
<span class="t" style="left:324.06px;top:285.90px;font-size:12.40px;color:#333;">E</span>
<span class="t" style="left:409.01px;top:285.90px;font-size:12.40px;color:#333;">F</span>
<span class="t" style="left:495.48px;top:285.90px;font-size:12.40px;color:#333;">G</span>
<span class="t" style="left:583.32px;top:285.90px;font-size:12.40px;color:#333;">H</span>
<span class="t" style="left:707.53px;top:285.90px;font-size:12.40px;color:#333;">I</span>
<span class="t" style="left:841.10px;top:285.90px;font-size:12.40px;color:#333;">J</span>
<span class="t" style="left:971.16px;top:285.90px;font-size:12.40px;color:#333;">K</span>
<span class="t" style="left:1102.85px;top:285.90px;font-size:12.40px;color:#333;">L</span>
<span class="t" style="left:1204.34px;top:285.90px;font-size:12.40px;color:#333;">M</span>
<span class="t" style="left:1308.66px;top:285.90px;font-size:12.40px;color:#333;">P</span>
<span class="t" style="left:1411.28px;top:285.90px;font-size:12.40px;color:#333;">Q</span>
<span class="t" style="left:1514.87px;top:285.90px;font-size:12.40px;color:#333;">R</span>
<span class="t" style="left:1690.66px;top:285.90px;font-size:12.40px;color:#333;">S</span>
<span class="t" style="left:20.30px;top:308.78px;font-size:12.60px;color:#333;">1</span>
<span class="t" style="left:20.30px;top:324.08px;font-size:12.60px;color:#333;">2</span>
<span class="t" style="left:20.30px;top:340.48px;font-size:12.60px;color:#333;">3</span>
<span class="t" style="left:20.30px;top:356.08px;font-size:12.60px;color:#333;">4</span>
<span class="t" style="left:20.30px;top:371.93px;font-size:12.60px;color:#333;">5</span>
<span class="t" style="left:20.30px;top:387.73px;font-size:12.60px;color:#333;">6</span>
<span class="t" style="left:20.30px;top:403.48px;font-size:12.60px;color:#333;">7</span>
<span class="t" style="left:20.30px;top:419.23px;font-size:12.60px;color:#333;">8</span>
<span class="t" style="left:20.30px;top:435.08px;font-size:12.60px;color:#333;">9</span>
<span class="t" style="left:16.79px;top:450.83px;font-size:12.60px;color:#333;">10</span>
<span class="t" style="left:17.26px;top:466.48px;font-size:12.60px;color:#333;">11</span>
<span class="t" style="left:16.79px;top:482.18px;font-size:12.60px;color:#333;">12</span>
<span class="t" style="left:16.79px;top:497.38px;font-size:12.60px;color:#333;">13</span>
<span class="t" style="left:16.79px;top:512.03px;font-size:12.60px;color:#333;">14</span>
<span class="t" style="left:16.79px;top:525.83px;font-size:12.60px;color:#333;">15</span>
<span class="t" style="left:16.79px;top:539.88px;font-size:12.60px;color:#333;">16</span>
<span class="t" style="left:16.79px;top:553.93px;font-size:12.60px;color:#333;">17</span>
<span class="t" style="left:16.79px;top:567.83px;font-size:12.60px;color:#333;">18</span>
<span class="t" style="left:16.79px;top:581.63px;font-size:12.60px;color:#333;">19</span>
<span class="t" style="left:16.79px;top:595.53px;font-size:12.60px;color:#333;">20</span>
<span class="t" style="left:16.79px;top:609.53px;font-size:12.60px;color:#333;">21</span>
<span class="t" style="left:16.79px;top:623.38px;font-size:12.60px;color:#333;">22</span>
<span class="t" style="left:16.79px;top:637.13px;font-size:12.60px;color:#333;">23</span>
<span class="t" style="left:16.79px;top:651.03px;font-size:12.60px;color:#333;">24</span>
<span class="t" style="left:16.79px;top:664.93px;font-size:12.60px;color:#333;">25</span>
<span class="t" style="left:16.79px;top:678.73px;font-size:12.60px;color:#333;">26</span>
<span class="t" style="left:16.79px;top:692.93px;font-size:12.60px;color:#333;">27</span>
<span class="t" style="left:16.79px;top:706.63px;font-size:12.60px;color:#333;">28</span>
<span class="t" style="left:16.79px;top:720.43px;font-size:12.60px;color:#333;">29</span>
<span class="t" style="left:16.79px;top:734.33px;font-size:12.60px;color:#333;">30</span>
<span class="t" style="left:16.79px;top:748.63px;font-size:12.60px;color:#333;">31</span>
<span class="t" style="left:16.79px;top:763.13px;font-size:12.60px;color:#333;">32</span>
<span class="t" style="left:16.79px;top:778.53px;font-size:12.60px;color:#333;">33</span>
<span class="t" style="left:16.79px;top:793.73px;font-size:12.60px;color:#333;">34</span>
<span class="t" style="left:16.79px;top:807.93px;font-size:12.60px;color:#333;">35</span>
<span class="t" style="left:16.79px;top:821.83px;font-size:12.60px;color:#333;">36</span>
<span class="t" style="left:16.79px;top:836.68px;font-size:12.60px;color:#333;">37</span>
<span class="t" style="left:16.79px;top:851.88px;font-size:12.60px;color:#333;">38</span>
<span class="t" style="left:16.79px;top:866.18px;font-size:12.60px;color:#333;">39</span>
<span class="t" style="left:16.79px;top:879.63px;font-size:12.60px;color:#333;">40</span>
<div class="clip" style="left:48.10px;top:324.50px;width:55.00px;height:17.50px"><span class="t" style="left:8.20px;top:-2.83px;font-size:9.60px;color:#000;font-weight:700;transform:scaleX(0.9578);transform-origin:0 0;">PO Number</span></div>
<div class="clip" style="left:115.60px;top:324.50px;width:69.80px;height:17.50px"><span class="t" style="left:1.60px;top:-2.83px;font-size:9.60px;color:#000;font-weight:700;transform:scaleX(0.9470);transform-origin:0 0;">Invoice Number</span></div>
<div class="clip" style="left:197.90px;top:324.50px;width:72.50px;height:17.50px"><span class="t" style="left:15.60px;top:-2.83px;font-size:9.60px;color:#000;font-weight:700;transform:scaleX(0.9391);transform-origin:0 0;">Store Number</span></div>
<div class="clip" style="left:282.90px;top:324.50px;width:80.70px;height:17.50px"><span class="t" style="left:4.70px;top:-2.83px;font-size:9.60px;color:#000;font-weight:700;transform:scaleX(0.9708);transform-origin:0 0;">Microfilm Number</span></div>
<div class="clip" style="left:376.10px;top:324.50px;width:63.50px;height:17.50px"><span class="t" style="left:13.60px;top:-2.83px;font-size:9.60px;color:#000;font-weight:700;transform:scaleX(0.9353);transform-origin:0 0;">Invoice Date</span></div>
<div class="clip" style="left:452.10px;top:324.50px;width:86.50px;height:17.50px"><span class="t" style="left:9.40px;top:-2.83px;font-size:9.60px;color:#000;font-weight:700;transform:scaleX(0.9616);transform-origin:0 0;">Invoice Amount($)</span></div>
<div class="clip" style="left:551.10px;top:324.50px;width:63.50px;height:17.50px"><span class="t" style="left:25.90px;top:-2.83px;font-size:9.60px;color:#000;font-weight:700;transform:scaleX(0.9318);transform-origin:0 0;">Date Paid</span></div>
<div class="clip" style="left:627.10px;top:324.50px;width:154.40px;height:17.50px"><span class="t" style="left:1.30px;top:-2.83px;font-size:9.60px;color:#000;font-weight:700;transform:scaleX(0.9641);transform-origin:0 0;">Discount($)</span></div>
<div class="clip" style="left:794.00px;top:324.50px;width:90.50px;height:17.50px"><span class="t" style="left:26.90px;top:-2.83px;font-size:9.60px;color:#000;font-weight:700;transform:scaleX(0.9464);transform-origin:0 0;">Amount Paid($)</span></div>
<div class="clip" style="left:897.00px;top:324.50px;width:146.70px;height:17.50px"><span class="t" style="left:69.90px;top:-2.83px;font-size:9.60px;color:#000;font-weight:700;transform:scaleX(0.9116);transform-origin:0 0;">DEDUCTION CODE</span></div>
<div class="clip" style="left:1056.20px;top:324.50px;width:90.30px;height:17.50px"><span class="t" style="left:25.50px;top:-2.83px;font-size:9.60px;color:#000;font-weight:700;transform:scaleX(0.9122);transform-origin:0 0;">Entered in QBO</span></div>
<div class="clip" style="left:1159.00px;top:324.50px;width:91.10px;height:17.50px"><span class="t" style="left:30.30px;top:-2.83px;font-size:9.60px;color:#000;font-weight:700;transform:scaleX(0.9373);transform-origin:0 0;">Invoice Status</span></div>
<div class="clip" style="left:1262.60px;top:324.50px;width:90.50px;height:17.50px"><span class="t" style="left:48.10px;top:-2.83px;font-size:9.60px;color:#000;font-weight:700;transform:scaleX(0.9581);transform-origin:0 0;">Disputable</span></div>
<div class="clip" style="left:1365.60px;top:324.50px;width:91.10px;height:17.50px"><span class="t" style="left:56.50px;top:-2.83px;font-size:9.60px;color:#000;font-weight:700;transform:scaleX(0.9602);transform-origin:0 0;">Disputed</span></div>
<div class="clip" style="left:1469.20px;top:324.50px;width:90.40px;height:17.50px"><span class="t" style="left:1.60px;top:-2.83px;font-size:9.60px;color:#000;font-weight:700;transform:scaleX(0.9544);transform-origin:0 0;">Status</span></div>
<div class="clip" style="left:1572.10px;top:324.50px;width:234.50px;height:17.50px"><span class="t" style="left:2.30px;top:-2.83px;font-size:9.60px;color:#000;font-weight:700;transform:scaleX(0.9616);transform-origin:0 0;">Maria Notes:</span></div>
<span class="t" style="left:119.00px;top:339.27px;font-size:8.30px;color:#222;transform:scaleX(0.9759);transform-origin:0 0;">5320</span>
<span class="t" style="left:256.78px;top:339.27px;font-size:8.30px;color:#222;transform:scaleX(0.9759);transform-origin:0 0;">12791</span>
<span class="t" style="left:327.46px;top:339.27px;font-size:8.30px;color:#222;transform:scaleX(0.9759);transform-origin:0 0;">2004077552</span>
<span class="t" style="left:405.20px;top:339.27px;font-size:8.30px;color:#222;transform:scaleX(1.0425);transform-origin:0 0;">12/20/2023</span>
<span class="t" style="left:520.03px;top:339.27px;font-size:8.30px;color:#222;transform:scaleX(0.9759);transform-origin:0 0;">-158.52</span>
<span class="t" style="left:580.20px;top:339.27px;font-size:8.30px;color:#222;transform:scaleX(1.0425);transform-origin:0 0;">02/06/2024</span>
<span class="t" style="left:865.93px;top:339.27px;font-size:8.30px;color:#222;transform:scaleX(0.9759);transform-origin:0 0;">-158.52</span>
<span class="t" style="left:1132.35px;top:338.74px;font-size:8.70px;color:#1a1a1a;transform:scaleX(0.9089);transform-origin:0 0;">Yes</span>
<span class="t" style="left:1223.95px;top:338.74px;font-size:8.70px;color:#fff;transform:scaleX(0.8973);transform-origin:0 0;">Closed</span>
<span class="t" style="left:119.00px;top:354.87px;font-size:8.30px;color:#222;transform:scaleX(0.9759);transform-origin:0 0;">5321</span>
<span class="t" style="left:256.78px;top:354.87px;font-size:8.30px;color:#222;transform:scaleX(0.9759);transform-origin:0 0;">12791</span>
<span class="t" style="left:327.46px;top:354.87px;font-size:8.30px;color:#222;transform:scaleX(0.9759);transform-origin:0 0;">2004077552</span>
<span class="t" style="left:405.20px;top:354.87px;font-size:8.30px;color:#222;transform:scaleX(1.0425);transform-origin:0 0;">12/20/2023</span>
<span class="t" style="left:524.54px;top:354.87px;font-size:8.30px;color:#222;transform:scaleX(0.9759);transform-origin:0 0;">-131.4</span>
<span class="t" style="left:580.20px;top:354.87px;font-size:8.30px;color:#222;transform:scaleX(1.0425);transform-origin:0 0;">02/06/2024</span>
<span class="t" style="left:870.44px;top:354.87px;font-size:8.30px;color:#222;transform:scaleX(0.9759);transform-origin:0 0;">-131.4</span>
<span class="t" style="left:1132.35px;top:354.34px;font-size:8.70px;color:#1a1a1a;transform:scaleX(0.9089);transform-origin:0 0;">Yes</span>
<span class="t" style="left:1223.95px;top:354.34px;font-size:8.70px;color:#fff;transform:scaleX(0.8973);transform-origin:0 0;">Closed</span>
<span class="t" style="left:119.00px;top:370.72px;font-size:8.30px;color:#222;transform:scaleX(0.9759);transform-origin:0 0;">5322</span>
<span class="t" style="left:256.78px;top:370.72px;font-size:8.30px;color:#222;transform:scaleX(0.9759);transform-origin:0 0;">12791</span>
<span class="t" style="left:327.46px;top:370.72px;font-size:8.30px;color:#222;transform:scaleX(0.9759);transform-origin:0 0;">2004077552</span>
<span class="t" style="left:405.20px;top:370.72px;font-size:8.30px;color:#222;transform:scaleX(1.0425);transform-origin:0 0;">12/20/2023</span>
<span class="t" style="left:520.63px;top:370.72px;font-size:8.30px;color:#222;transform:scaleX(0.9759);transform-origin:0 0;">-114.48</span>
<span class="t" style="left:580.20px;top:370.72px;font-size:8.30px;color:#222;transform:scaleX(1.0425);transform-origin:0 0;">02/06/2024</span>
<span class="t" style="left:866.53px;top:370.72px;font-size:8.30px;color:#222;transform:scaleX(0.9759);transform-origin:0 0;">-114.48</span>
<span class="t" style="left:1132.35px;top:370.19px;font-size:8.70px;color:#1a1a1a;transform:scaleX(0.9089);transform-origin:0 0;">Yes</span>
<span class="t" style="left:1223.95px;top:370.19px;font-size:8.70px;color:#fff;transform:scaleX(0.8973);transform-origin:0 0;">Closed</span>
<span class="t" style="left:119.00px;top:386.52px;font-size:8.30px;color:#222;transform:scaleX(0.9759);transform-origin:0 0;">5323</span>
<span class="t" style="left:256.78px;top:386.52px;font-size:8.30px;color:#222;transform:scaleX(0.9759);transform-origin:0 0;">12791</span>
<span class="t" style="left:327.46px;top:386.52px;font-size:8.30px;color:#222;transform:scaleX(0.9759);transform-origin:0 0;">2004077552</span>
<span class="t" style="left:405.20px;top:386.52px;font-size:8.30px;color:#222;transform:scaleX(1.0425);transform-origin:0 0;">12/20/2023</span>
<span class="t" style="left:520.03px;top:386.52px;font-size:8.30px;color:#222;transform:scaleX(0.9759);transform-origin:0 0;">-152.76</span>
<span class="t" style="left:580.20px;top:386.52px;font-size:8.30px;color:#222;transform:scaleX(1.0425);transform-origin:0 0;">02/06/2024</span>
<span class="t" style="left:865.93px;top:386.52px;font-size:8.30px;color:#222;transform:scaleX(0.9759);transform-origin:0 0;">-152.76</span>
<span class="t" style="left:1132.35px;top:385.99px;font-size:8.70px;color:#1a1a1a;transform:scaleX(0.9089);transform-origin:0 0;">Yes</span>
<span class="t" style="left:1223.95px;top:385.99px;font-size:8.70px;color:#fff;transform:scaleX(0.8973);transform-origin:0 0;">Closed</span>
<span class="t" style="left:119.00px;top:402.27px;font-size:8.30px;color:#222;transform:scaleX(0.9759);transform-origin:0 0;">5324</span>
<span class="t" style="left:256.78px;top:402.27px;font-size:8.30px;color:#222;transform:scaleX(0.9759);transform-origin:0 0;">12791</span>
<span class="t" style="left:327.46px;top:402.27px;font-size:8.30px;color:#222;transform:scaleX(0.9759);transform-origin:0 0;">2004077552</span>
<span class="t" style="left:405.20px;top:402.27px;font-size:8.30px;color:#222;transform:scaleX(1.0425);transform-origin:0 0;">12/20/2023</span>
<span class="t" style="left:520.03px;top:402.27px;font-size:8.30px;color:#222;transform:scaleX(0.9759);transform-origin:0 0;">-152.76</span>
<span class="t" style="left:580.20px;top:402.27px;font-size:8.30px;color:#222;transform:scaleX(1.0425);transform-origin:0 0;">02/06/2024</span>
<span class="t" style="left:865.93px;top:402.27px;font-size:8.30px;color:#222;transform:scaleX(0.9759);transform-origin:0 0;">-152.76</span>
<span class="t" style="left:1132.35px;top:401.74px;font-size:8.70px;color:#1a1a1a;transform:scaleX(0.9089);transform-origin:0 0;">Yes</span>
<span class="t" style="left:1223.95px;top:401.74px;font-size:8.70px;color:#fff;transform:scaleX(0.8973);transform-origin:0 0;">Closed</span>
<span class="t" style="left:119.00px;top:418.02px;font-size:8.30px;color:#222;transform:scaleX(0.9759);transform-origin:0 0;">5325</span>
<span class="t" style="left:256.78px;top:418.02px;font-size:8.30px;color:#222;transform:scaleX(0.9759);transform-origin:0 0;">12791</span>
<span class="t" style="left:327.46px;top:418.02px;font-size:8.30px;color:#222;transform:scaleX(0.9759);transform-origin:0 0;">2004077552</span>
<span class="t" style="left:405.20px;top:418.02px;font-size:8.30px;color:#222;transform:scaleX(1.0425);transform-origin:0 0;">12/20/2023</span>
<span class="t" style="left:520.03px;top:418.02px;font-size:8.30px;color:#222;transform:scaleX(0.9759);transform-origin:0 0;">-152.76</span>
<span class="t" style="left:580.20px;top:418.02px;font-size:8.30px;color:#222;transform:scaleX(1.0425);transform-origin:0 0;">02/06/2024</span>
<span class="t" style="left:865.93px;top:418.02px;font-size:8.30px;color:#222;transform:scaleX(0.9759);transform-origin:0 0;">-152.76</span>
<span class="t" style="left:1132.35px;top:417.49px;font-size:8.70px;color:#1a1a1a;transform:scaleX(0.9089);transform-origin:0 0;">Yes</span>
<span class="t" style="left:1223.95px;top:417.49px;font-size:8.70px;color:#fff;transform:scaleX(0.8973);transform-origin:0 0;">Closed</span>
<span class="t" style="left:119.00px;top:433.87px;font-size:8.30px;color:#222;transform:scaleX(0.9759);transform-origin:0 0;">5326</span>
<span class="t" style="left:256.78px;top:433.87px;font-size:8.30px;color:#222;transform:scaleX(0.9759);transform-origin:0 0;">12791</span>
<span class="t" style="left:327.46px;top:433.87px;font-size:8.30px;color:#222;transform:scaleX(0.9759);transform-origin:0 0;">2004077552</span>
<span class="t" style="left:405.20px;top:433.87px;font-size:8.30px;color:#222;transform:scaleX(1.0425);transform-origin:0 0;">12/20/2023</span>
<span class="t" style="left:524.54px;top:433.87px;font-size:8.30px;color:#222;transform:scaleX(0.9759);transform-origin:0 0;">-271.5</span>
<span class="t" style="left:580.20px;top:433.87px;font-size:8.30px;color:#222;transform:scaleX(1.0425);transform-origin:0 0;">02/06/2024</span>
<span class="t" style="left:870.44px;top:433.87px;font-size:8.30px;color:#222;transform:scaleX(0.9759);transform-origin:0 0;">-271.5</span>
<span class="t" style="left:1132.35px;top:433.34px;font-size:8.70px;color:#1a1a1a;transform:scaleX(0.9089);transform-origin:0 0;">Yes</span>
<span class="t" style="left:1223.95px;top:433.34px;font-size:8.70px;color:#fff;transform:scaleX(0.8973);transform-origin:0 0;">Closed</span>
<span class="t" style="left:119.00px;top:449.62px;font-size:8.30px;color:#222;transform:scaleX(0.9759);transform-origin:0 0;">5327</span>
<span class="t" style="left:256.78px;top:449.62px;font-size:8.30px;color:#222;transform:scaleX(0.9759);transform-origin:0 0;">12791</span>
<span class="t" style="left:327.46px;top:449.62px;font-size:8.30px;color:#222;transform:scaleX(0.9759);transform-origin:0 0;">2004077552</span>
<span class="t" style="left:405.20px;top:449.62px;font-size:8.30px;color:#222;transform:scaleX(1.0425);transform-origin:0 0;">12/20/2023</span>
<span class="t" style="left:525.74px;top:449.62px;font-size:8.30px;color:#222;transform:scaleX(0.9759);transform-origin:0 0;">-111.6</span>
<span class="t" style="left:580.20px;top:449.62px;font-size:8.30px;color:#222;transform:scaleX(1.0425);transform-origin:0 0;">02/06/2024</span>
<span class="t" style="left:871.64px;top:449.62px;font-size:8.30px;color:#222;transform:scaleX(0.9759);transform-origin:0 0;">-111.6</span>
<span class="t" style="left:1132.35px;top:449.09px;font-size:8.70px;color:#1a1a1a;transform:scaleX(0.9089);transform-origin:0 0;">Yes</span>
<span class="t" style="left:1223.95px;top:449.09px;font-size:8.70px;color:#fff;transform:scaleX(0.8973);transform-origin:0 0;">Closed</span>
<span class="t" style="left:119.00px;top:465.27px;font-size:8.30px;color:#222;transform:scaleX(0.9759);transform-origin:0 0;">5328</span>
<span class="t" style="left:256.78px;top:465.27px;font-size:8.30px;color:#222;transform:scaleX(0.9759);transform-origin:0 0;">12791</span>
<span class="t" style="left:327.46px;top:465.27px;font-size:8.30px;color:#222;transform:scaleX(0.9759);transform-origin:0 0;">2004077552</span>
<span class="t" style="left:405.20px;top:465.27px;font-size:8.30px;color:#222;transform:scaleX(1.0425);transform-origin:0 0;">12/20/2023</span>
<span class="t" style="left:520.03px;top:465.27px;font-size:8.30px;color:#222;transform:scaleX(0.9759);transform-origin:0 0;">-121.98</span>
<span class="t" style="left:580.20px;top:465.27px;font-size:8.30px;color:#222;transform:scaleX(1.0425);transform-origin:0 0;">02/06/2024</span>
<span class="t" style="left:865.93px;top:465.27px;font-size:8.30px;color:#222;transform:scaleX(0.9759);transform-origin:0 0;">-121.98</span>
<span class="t" style="left:1132.35px;top:464.74px;font-size:8.70px;color:#1a1a1a;transform:scaleX(0.9089);transform-origin:0 0;">Yes</span>
<span class="t" style="left:1223.95px;top:464.74px;font-size:8.70px;color:#fff;transform:scaleX(0.8973);transform-origin:0 0;">Closed</span>
<span class="t" style="left:119.00px;top:496.67px;font-size:8.30px;color:#222;transform:scaleX(0.9759);transform-origin:0 0;">5330</span>
<span class="t" style="left:256.78px;top:496.67px;font-size:8.30px;color:#222;transform:scaleX(0.9759);transform-origin:0 0;">12791</span>
<span class="t" style="left:327.46px;top:496.67px;font-size:8.30px;color:#222;transform:scaleX(0.9759);transform-origin:0 0;">2004077552</span>
<span class="t" style="left:405.20px;top:496.67px;font-size:8.30px;color:#222;transform:scaleX(1.0425);transform-origin:0 0;">12/20/2023</span>
<span class="t" style="left:521.23px;top:496.67px;font-size:8.30px;color:#222;transform:scaleX(0.9759);transform-origin:0 0;">-111.48</span>
<span class="t" style="left:580.20px;top:496.67px;font-size:8.30px;color:#222;transform:scaleX(1.0425);transform-origin:0 0;">02/06/2024</span>
<span class="t" style="left:867.13px;top:496.67px;font-size:8.30px;color:#222;transform:scaleX(0.9759);transform-origin:0 0;">-111.48</span>
<span class="t" style="left:1132.35px;top:496.14px;font-size:8.70px;color:#1a1a1a;transform:scaleX(0.9089);transform-origin:0 0;">Yes</span>
<span class="t" style="left:1223.95px;top:496.14px;font-size:8.70px;color:#fff;transform:scaleX(0.8973);transform-origin:0 0;">Closed</span>
<span class="t" style="left:119.00px;top:480.97px;font-size:8.30px;color:#222;transform:scaleX(0.9759);transform-origin:0 0;">5329</span>
<span class="t" style="left:256.78px;top:480.97px;font-size:8.30px;color:#222;transform:scaleX(0.9759);transform-origin:0 0;">12791</span>
<span class="t" style="left:327.46px;top:480.97px;font-size:8.30px;color:#222;transform:scaleX(0.9759);transform-origin:0 0;">2004077552</span>
<span class="t" style="left:405.20px;top:480.97px;font-size:8.30px;color:#222;transform:scaleX(1.0425);transform-origin:0 0;">12/20/2023</span>
<span class="t" style="left:524.54px;top:480.97px;font-size:8.30px;color:#222;transform:scaleX(0.9759);transform-origin:0 0;">-92.46</span>
<span class="t" style="left:580.20px;top:480.97px;font-size:8.30px;color:#222;transform:scaleX(1.0425);transform-origin:0 0;">02/06/2024</span>
<span class="t" style="left:870.44px;top:480.97px;font-size:8.30px;color:#222;transform:scaleX(0.9759);transform-origin:0 0;">-92.46</span>
<div class="clip" style="left:627.10px;top:483.50px;width:165.70px;height:15.70px"><span class="t" style="left:1.50px;top:-2.03px;font-size:8.30px;color:#222;transform:scaleX(0.9631);transform-origin:0 0;">S/P #22.02 BNR 814199</span></div>
<span class="t" style="left:1132.35px;top:480.44px;font-size:8.70px;color:#1a1a1a;transform:scaleX(0.9089);transform-origin:0 0;">Yes</span>
<span class="t" style="left:1223.95px;top:480.44px;font-size:8.70px;color:#fff;transform:scaleX(0.8973);transform-origin:0 0;">Closed</span>
<span class="t" style="left:86.78px;top:511.32px;font-size:8.30px;color:#222;transform:scaleX(0.9759);transform-origin:0 0;">Payout</span>
<span class="t" style="left:327.46px;top:511.32px;font-size:8.30px;color:#222;transform:scaleX(0.9759);transform-origin:0 0;">2004077552</span>
<span class="t" style="left:405.20px;top:511.32px;font-size:8.30px;color:#222;transform:scaleX(1.0425);transform-origin:0 0;">02/06/2024</span>
<span class="t" style="left:515.97px;top:511.32px;font-size:8.30px;color:#222;transform:scaleX(0.9759);transform-origin:0 0;">1,571.70</span>
<span class="t" style="left:119.00px;top:525.12px;font-size:8.30px;color:#222;transform:scaleX(0.9759);transform-origin:0 0;">5343</span>
<span class="t" style="left:256.78px;top:525.12px;font-size:8.30px;color:#222;transform:scaleX(0.9759);transform-origin:0 0;">12791</span>
<span class="t" style="left:327.46px;top:525.12px;font-size:8.30px;color:#222;transform:scaleX(0.9759);transform-origin:0 0;">2004087106</span>
<span class="t" style="left:405.20px;top:525.12px;font-size:8.30px;color:#222;transform:scaleX(1.0425);transform-origin:0 0;">12/26/2023</span>
<span class="t" style="left:517.78px;top:525.12px;font-size:8.30px;color:#222;transform:scaleX(0.9759);transform-origin:0 0;">- 140.88</span>
<span class="t" style="left:580.20px;top:525.12px;font-size:8.30px;color:#222;transform:scaleX(1.0425);transform-origin:0 0;">02/13/2024</span>
<span class="t" style="left:863.68px;top:525.12px;font-size:8.30px;color:#222;transform:scaleX(0.9759);transform-origin:0 0;">- 140.88</span>
<span class="t" style="left:1132.35px;top:524.59px;font-size:8.70px;color:#1a1a1a;transform:scaleX(0.9089);transform-origin:0 0;">Yes</span>
<span class="t" style="left:1223.95px;top:524.59px;font-size:8.70px;color:#fff;transform:scaleX(0.8973);transform-origin:0 0;">Closed</span>
<span class="t" style="left:119.00px;top:539.17px;font-size:8.30px;color:#222;transform:scaleX(0.9759);transform-origin:0 0;">5346</span>
<span class="t" style="left:256.78px;top:539.17px;font-size:8.30px;color:#222;transform:scaleX(0.9759);transform-origin:0 0;">12791</span>
<span class="t" style="left:327.46px;top:539.17px;font-size:8.30px;color:#222;transform:scaleX(0.9759);transform-origin:0 0;">2004087106</span>
<span class="t" style="left:405.20px;top:539.17px;font-size:8.30px;color:#222;transform:scaleX(1.0425);transform-origin:0 0;">12/27/2023</span>
<span class="t" style="left:518.38px;top:539.17px;font-size:8.30px;color:#222;transform:scaleX(0.9759);transform-origin:0 0;">- 113.04</span>
<span class="t" style="left:580.20px;top:539.17px;font-size:8.30px;color:#222;transform:scaleX(1.0425);transform-origin:0 0;">02/13/2024</span>
<span class="t" style="left:864.28px;top:539.17px;font-size:8.30px;color:#222;transform:scaleX(0.9759);transform-origin:0 0;">- 113.04</span>
<span class="t" style="left:1132.35px;top:538.64px;font-size:8.70px;color:#1a1a1a;transform:scaleX(0.9089);transform-origin:0 0;">Yes</span>
<span class="t" style="left:1223.95px;top:538.64px;font-size:8.70px;color:#fff;transform:scaleX(0.8973);transform-origin:0 0;">Closed</span>
<span class="t" style="left:86.78px;top:553.22px;font-size:8.30px;color:#222;transform:scaleX(0.9759);transform-origin:0 0;">Payout</span>
<span class="t" style="left:256.78px;top:553.22px;font-size:8.30px;color:#222;transform:scaleX(0.9759);transform-origin:0 0;">12791</span>
<span class="t" style="left:327.46px;top:553.22px;font-size:8.30px;color:#222;transform:scaleX(0.9759);transform-origin:0 0;">2004087106</span>
<span class="t" style="left:405.20px;top:553.22px;font-size:8.30px;color:#222;transform:scaleX(1.0425);transform-origin:0 0;">02/13/2024</span>
<span class="t" style="left:522.73px;top:553.22px;font-size:8.30px;color:#222;transform:scaleX(0.9759);transform-origin:0 0;">253.92</span>
<span class="t" style="left:119.00px;top:567.12px;font-size:8.30px;color:#222;transform:scaleX(0.9759);transform-origin:0 0;">5356</span>
<span class="t" style="left:256.78px;top:567.12px;font-size:8.30px;color:#222;transform:scaleX(0.9759);transform-origin:0 0;">12791</span>
<span class="t" style="left:327.46px;top:567.12px;font-size:8.30px;color:#222;transform:scaleX(0.9759);transform-origin:0 0;">2004095105</span>
<span class="t" style="left:405.20px;top:567.12px;font-size:8.30px;color:#222;transform:scaleX(1.0425);transform-origin:0 0;">01/02/2024</span>
<span class="t" style="left:517.78px;top:567.12px;font-size:8.30px;color:#222;transform:scaleX(0.9759);transform-origin:0 0;">- 104.58</span>
<span class="t" style="left:580.20px;top:567.12px;font-size:8.30px;color:#222;transform:scaleX(1.0425);transform-origin:0 0;">02/17/2024</span>
<span class="t" style="left:863.68px;top:567.12px;font-size:8.30px;color:#222;transform:scaleX(0.9759);transform-origin:0 0;">- 104.58</span>
<span class="t" style="left:1132.35px;top:566.59px;font-size:8.70px;color:#1a1a1a;transform:scaleX(0.9089);transform-origin:0 0;">Yes</span>
<span class="t" style="left:1223.95px;top:566.59px;font-size:8.70px;color:#fff;transform:scaleX(0.8973);transform-origin:0 0;">Closed</span>
<span class="t" style="left:119.00px;top:580.92px;font-size:8.30px;color:#222;transform:scaleX(0.9759);transform-origin:0 0;">5357</span>
<span class="t" style="left:256.78px;top:580.92px;font-size:8.30px;color:#222;transform:scaleX(0.9759);transform-origin:0 0;">12791</span>
<span class="t" style="left:327.46px;top:580.92px;font-size:8.30px;color:#222;transform:scaleX(0.9759);transform-origin:0 0;">2004095105</span>
<span class="t" style="left:405.20px;top:580.92px;font-size:8.30px;color:#222;transform:scaleX(1.0425);transform-origin:0 0;">01/02/2024</span>
<span class="t" style="left:517.78px;top:580.92px;font-size:8.30px;color:#222;transform:scaleX(0.9759);transform-origin:0 0;">- 150.36</span>
<span class="t" style="left:580.20px;top:580.92px;font-size:8.30px;color:#222;transform:scaleX(1.0425);transform-origin:0 0;">02/17/2024</span>
<span class="t" style="left:863.68px;top:580.92px;font-size:8.30px;color:#222;transform:scaleX(0.9759);transform-origin:0 0;">- 150.36</span>
<span class="t" style="left:1132.35px;top:580.39px;font-size:8.70px;color:#1a1a1a;transform:scaleX(0.9089);transform-origin:0 0;">Yes</span>
<span class="t" style="left:1223.95px;top:580.39px;font-size:8.70px;color:#fff;transform:scaleX(0.8973);transform-origin:0 0;">Closed</span>
<span class="t" style="left:119.00px;top:594.82px;font-size:8.30px;color:#222;transform:scaleX(0.9759);transform-origin:0 0;">5358</span>
<span class="t" style="left:256.78px;top:594.82px;font-size:8.30px;color:#222;transform:scaleX(0.9759);transform-origin:0 0;">12791</span>
<span class="t" style="left:327.46px;top:594.82px;font-size:8.30px;color:#222;transform:scaleX(0.9759);transform-origin:0 0;">2004095105</span>
<span class="t" style="left:405.20px;top:594.82px;font-size:8.30px;color:#222;transform:scaleX(1.0425);transform-origin:0 0;">01/02/2024</span>
<span class="t" style="left:522.28px;top:594.82px;font-size:8.30px;color:#222;transform:scaleX(0.9759);transform-origin:0 0;">- 164.4</span>
<span class="t" style="left:580.20px;top:594.82px;font-size:8.30px;color:#222;transform:scaleX(1.0425);transform-origin:0 0;">02/17/2024</span>
<span class="t" style="left:863.68px;top:594.82px;font-size:8.30px;color:#222;transform:scaleX(0.9759);transform-origin:0 0;">- 164.40</span>
<span class="t" style="left:1132.35px;top:594.29px;font-size:8.70px;color:#1a1a1a;transform:scaleX(0.9089);transform-origin:0 0;">Yes</span>
<span class="t" style="left:1223.95px;top:594.29px;font-size:8.70px;color:#fff;transform:scaleX(0.8973);transform-origin:0 0;">Closed</span>
<span class="t" style="left:119.00px;top:608.82px;font-size:8.30px;color:#222;transform:scaleX(0.9759);transform-origin:0 0;">5359</span>
<span class="t" style="left:256.78px;top:608.82px;font-size:8.30px;color:#222;transform:scaleX(0.9759);transform-origin:0 0;">12791</span>
<span class="t" style="left:327.46px;top:608.82px;font-size:8.30px;color:#222;transform:scaleX(0.9759);transform-origin:0 0;">2004095105</span>
<span class="t" style="left:405.20px;top:608.82px;font-size:8.30px;color:#222;transform:scaleX(1.0425);transform-origin:0 0;">01/02/2024</span>
<span class="t" style="left:517.78px;top:608.82px;font-size:8.30px;color:#222;transform:scaleX(0.9759);transform-origin:0 0;">- 143.28</span>
<span class="t" style="left:580.20px;top:608.82px;font-size:8.30px;color:#222;transform:scaleX(1.0425);transform-origin:0 0;">02/17/2024</span>
<span class="t" style="left:863.68px;top:608.82px;font-size:8.30px;color:#222;transform:scaleX(0.9759);transform-origin:0 0;">- 143.28</span>
<span class="t" style="left:1132.35px;top:608.29px;font-size:8.70px;color:#1a1a1a;transform:scaleX(0.9089);transform-origin:0 0;">Yes</span>
<span class="t" style="left:1223.95px;top:608.29px;font-size:8.70px;color:#fff;transform:scaleX(0.8973);transform-origin:0 0;">Closed</span>
<span class="t" style="left:119.00px;top:622.67px;font-size:8.30px;color:#222;transform:scaleX(0.9759);transform-origin:0 0;">5360</span>
<span class="t" style="left:256.78px;top:622.67px;font-size:8.30px;color:#222;transform:scaleX(0.9759);transform-origin:0 0;">12791</span>
<span class="t" style="left:327.46px;top:622.67px;font-size:8.30px;color:#222;transform:scaleX(0.9759);transform-origin:0 0;">2004095105</span>
<span class="t" style="left:405.20px;top:622.67px;font-size:8.30px;color:#222;transform:scaleX(1.0425);transform-origin:0 0;">01/02/2024</span>
<span class="t" style="left:517.78px;top:622.67px;font-size:8.30px;color:#222;transform:scaleX(0.9759);transform-origin:0 0;">- 105.12</span>
<span class="t" style="left:580.20px;top:622.67px;font-size:8.30px;color:#222;transform:scaleX(1.0425);transform-origin:0 0;">02/17/2024</span>
<span class="t" style="left:863.68px;top:622.67px;font-size:8.30px;color:#222;transform:scaleX(0.9759);transform-origin:0 0;">- 105.12</span>
<span class="t" style="left:1132.35px;top:622.14px;font-size:8.70px;color:#1a1a1a;transform:scaleX(0.9089);transform-origin:0 0;">Yes</span>
<span class="t" style="left:1223.95px;top:622.14px;font-size:8.70px;color:#fff;transform:scaleX(0.8973);transform-origin:0 0;">Closed</span>
<span class="t" style="left:119.00px;top:636.42px;font-size:8.30px;color:#222;transform:scaleX(0.9759);transform-origin:0 0;">5364</span>
<span class="t" style="left:256.78px;top:636.42px;font-size:8.30px;color:#222;transform:scaleX(0.9759);transform-origin:0 0;">12791</span>
<span class="t" style="left:327.46px;top:636.42px;font-size:8.30px;color:#222;transform:scaleX(0.9759);transform-origin:0 0;">2004095105</span>
<span class="t" style="left:405.20px;top:636.42px;font-size:8.30px;color:#222;transform:scaleX(1.0425);transform-origin:0 0;">01/04/2024</span>
<span class="t" style="left:522.28px;top:636.42px;font-size:8.30px;color:#222;transform:scaleX(0.9759);transform-origin:0 0;">- 173.4</span>
<span class="t" style="left:580.20px;top:636.42px;font-size:8.30px;color:#222;transform:scaleX(1.0425);transform-origin:0 0;">02/17/2024</span>
<span class="t" style="left:863.68px;top:636.42px;font-size:8.30px;color:#222;transform:scaleX(0.9759);transform-origin:0 0;">- 173.40</span>
<span class="t" style="left:1132.35px;top:635.89px;font-size:8.70px;color:#1a1a1a;transform:scaleX(0.9089);transform-origin:0 0;">Yes</span>
<span class="t" style="left:1223.95px;top:635.89px;font-size:8.70px;color:#fff;transform:scaleX(0.8973);transform-origin:0 0;">Closed</span>
<span class="t" style="left:119.00px;top:650.32px;font-size:8.30px;color:#222;transform:scaleX(0.9759);transform-origin:0 0;">5365</span>
<span class="t" style="left:256.78px;top:650.32px;font-size:8.30px;color:#222;transform:scaleX(0.9759);transform-origin:0 0;">12791</span>
<span class="t" style="left:327.46px;top:650.32px;font-size:8.30px;color:#222;transform:scaleX(0.9759);transform-origin:0 0;">2004095105</span>
<span class="t" style="left:405.20px;top:650.32px;font-size:8.30px;color:#222;transform:scaleX(1.0425);transform-origin:0 0;">01/04/2024</span>
<span class="t" style="left:518.38px;top:650.32px;font-size:8.30px;color:#222;transform:scaleX(0.9759);transform-origin:0 0;">- 119.76</span>
<span class="t" style="left:580.20px;top:650.32px;font-size:8.30px;color:#222;transform:scaleX(1.0425);transform-origin:0 0;">02/17/2024</span>
<span class="t" style="left:864.28px;top:650.32px;font-size:8.30px;color:#222;transform:scaleX(0.9759);transform-origin:0 0;">- 119.76</span>
<span class="t" style="left:1132.35px;top:649.79px;font-size:8.70px;color:#1a1a1a;transform:scaleX(0.9089);transform-origin:0 0;">Yes</span>
<span class="t" style="left:1223.95px;top:649.79px;font-size:8.70px;color:#fff;transform:scaleX(0.8973);transform-origin:0 0;">Closed</span>
<span class="t" style="left:119.00px;top:664.22px;font-size:8.30px;color:#222;transform:scaleX(0.9759);transform-origin:0 0;">5366</span>
<span class="t" style="left:256.78px;top:664.22px;font-size:8.30px;color:#222;transform:scaleX(0.9759);transform-origin:0 0;">12791</span>
<span class="t" style="left:327.46px;top:664.22px;font-size:8.30px;color:#222;transform:scaleX(0.9759);transform-origin:0 0;">2004095105</span>
<span class="t" style="left:405.20px;top:664.22px;font-size:8.30px;color:#222;transform:scaleX(1.0425);transform-origin:0 0;">01/04/2024</span>
<span class="t" style="left:522.28px;top:664.22px;font-size:8.30px;color:#222;transform:scaleX(0.9759);transform-origin:0 0;">- 63.24</span>
<span class="t" style="left:580.20px;top:664.22px;font-size:8.30px;color:#222;transform:scaleX(1.0425);transform-origin:0 0;">02/17/2024</span>
<span class="t" style="left:868.18px;top:664.22px;font-size:8.30px;color:#222;transform:scaleX(0.9759);transform-origin:0 0;">- 63.24</span>
<div class="clip" style="left:627.10px;top:667.70px;width:165.70px;height:13.80px"><span class="t" style="left:1.50px;top:-2.98px;font-size:8.30px;color:#222;transform:scaleX(0.9631);transform-origin:0 0;">S/P $63.24 BNR 814198, 814211</span></div>
<span class="t" style="left:1132.35px;top:663.69px;font-size:8.70px;color:#1a1a1a;transform:scaleX(0.9089);transform-origin:0 0;">Yes</span>
<span class="t" style="left:1223.95px;top:663.69px;font-size:8.70px;color:#fff;transform:scaleX(0.8973);transform-origin:0 0;">Closed</span>
<span class="t" style="left:119.00px;top:678.02px;font-size:8.30px;color:#222;transform:scaleX(0.9759);transform-origin:0 0;">5367</span>
<span class="t" style="left:256.78px;top:678.02px;font-size:8.30px;color:#222;transform:scaleX(0.9759);transform-origin:0 0;">12791</span>
<span class="t" style="left:327.46px;top:678.02px;font-size:8.30px;color:#222;transform:scaleX(0.9759);transform-origin:0 0;">2004095105</span>
<span class="t" style="left:405.20px;top:678.02px;font-size:8.30px;color:#222;transform:scaleX(1.0425);transform-origin:0 0;">01/04/2024</span>
<span class="t" style="left:522.28px;top:678.02px;font-size:8.30px;color:#222;transform:scaleX(0.9759);transform-origin:0 0;">- 90.54</span>
<span class="t" style="left:580.20px;top:678.02px;font-size:8.30px;color:#222;transform:scaleX(1.0425);transform-origin:0 0;">02/17/2024</span>
<span class="t" style="left:868.18px;top:678.02px;font-size:8.30px;color:#222;transform:scaleX(0.9759);transform-origin:0 0;">- 90.54</span>
<div class="clip" style="left:627.10px;top:681.50px;width:165.70px;height:13.80px"><span class="t" style="left:1.50px;top:-2.98px;font-size:8.30px;color:#222;transform:scaleX(0.9631);transform-origin:0 0;">S/P $62.34 BNR 815111</span></div>
<span class="t" style="left:1132.35px;top:677.49px;font-size:8.70px;color:#1a1a1a;transform:scaleX(0.9089);transform-origin:0 0;">Yes</span>
<span class="t" style="left:1223.95px;top:677.49px;font-size:8.70px;color:#fff;transform:scaleX(0.8973);transform-origin:0 0;">Closed</span>
<span class="t" style="left:119.00px;top:691.72px;font-size:8.30px;color:#222;transform:scaleX(0.9759);transform-origin:0 0;">5368</span>
<span class="t" style="left:256.78px;top:691.72px;font-size:8.30px;color:#222;transform:scaleX(0.9759);transform-origin:0 0;">12791</span>
<span class="t" style="left:327.46px;top:691.72px;font-size:8.30px;color:#222;transform:scaleX(0.9759);transform-origin:0 0;">2004095105</span>
<span class="t" style="left:405.20px;top:691.72px;font-size:8.30px;color:#222;transform:scaleX(1.0425);transform-origin:0 0;">01/04/2024</span>
<span class="t" style="left:517.78px;top:691.72px;font-size:8.30px;color:#222;transform:scaleX(0.9759);transform-origin:0 0;">- 125.94</span>
<span class="t" style="left:580.20px;top:691.72px;font-size:8.30px;color:#222;transform:scaleX(1.0425);transform-origin:0 0;">02/17/2024</span>
<span class="t" style="left:863.68px;top:691.72px;font-size:8.30px;color:#222;transform:scaleX(0.9759);transform-origin:0 0;">- 125.94</span>
<span class="t" style="left:1132.35px;top:691.19px;font-size:8.70px;color:#1a1a1a;transform:scaleX(0.9089);transform-origin:0 0;">Yes</span>
<span class="t" style="left:1223.95px;top:691.19px;font-size:8.70px;color:#fff;transform:scaleX(0.8973);transform-origin:0 0;">Closed</span>
<span class="t" style="left:256.78px;top:706.12px;font-size:8.30px;color:#222;transform:scaleX(0.9759);transform-origin:0 0;">12791</span>
<span class="t" style="left:327.46px;top:706.12px;font-size:8.30px;color:#222;transform:scaleX(0.9759);transform-origin:0 0;">2004095105</span>
<span class="t" style="left:405.20px;top:706.12px;font-size:8.30px;color:#222;transform:scaleX(1.0425);transform-origin:0 0;">02/20/2024</span>
<span class="t" style="left:515.97px;top:706.12px;font-size:8.30px;color:#222;transform:scaleX(0.9759);transform-origin:0 0;">1,240.62</span>
<span class="t" style="left:119.00px;top:719.92px;font-size:8.30px;color:#222;transform:scaleX(0.9759);transform-origin:0 0;">5383</span>
<span class="t" style="left:256.78px;top:719.92px;font-size:8.30px;color:#222;transform:scaleX(0.9759);transform-origin:0 0;">12791</span>
<span class="t" style="left:327.46px;top:719.92px;font-size:8.30px;color:#222;transform:scaleX(0.9759);transform-origin:0 0;">2004105831</span>
<span class="t" style="left:405.20px;top:719.92px;font-size:8.30px;color:#222;transform:scaleX(1.0425);transform-origin:0 0;">01/10/2024</span>
<span class="t" style="left:517.78px;top:719.92px;font-size:8.30px;color:#222;transform:scaleX(0.9759);transform-origin:0 0;">- 269.46</span>
<span class="t" style="left:580.20px;top:719.92px;font-size:8.30px;color:#222;transform:scaleX(1.0425);transform-origin:0 0;">02/27/2024</span>
<span class="t" style="left:863.68px;top:719.92px;font-size:8.30px;color:#222;transform:scaleX(0.9759);transform-origin:0 0;">- 269.46</span>
<div class="clip" style="left:627.10px;top:722.70px;width:165.70px;height:13.80px"><span class="t" style="left:1.50px;top:-2.28px;font-size:8.30px;color:#222;transform:scaleX(0.9631);transform-origin:0 0;">S/P $42.30 PRICE 814212,814196, BNR ECZ</span></div>
<span class="t" style="left:1132.35px;top:718.69px;font-size:8.70px;color:#1a1a1a;transform:scaleX(0.9089);transform-origin:0 0;">Yes</span>
<span class="t" style="left:1223.95px;top:718.69px;font-size:8.70px;color:#fff;transform:scaleX(0.8973);transform-origin:0 0;">Closed</span>
<span class="t" style="left:119.00px;top:733.12px;font-size:8.30px;color:#222;transform:scaleX(0.9759);transform-origin:0 0;">5389</span>
<span class="t" style="left:256.78px;top:733.12px;font-size:8.30px;color:#222;transform:scaleX(0.9759);transform-origin:0 0;">12791</span>
<span class="t" style="left:327.46px;top:733.12px;font-size:8.30px;color:#222;transform:scaleX(0.9759);transform-origin:0 0;">2004105831</span>
<span class="t" style="left:405.20px;top:733.12px;font-size:8.30px;color:#222;transform:scaleX(1.0425);transform-origin:0 0;">01/15/2024</span>
<span class="t" style="left:517.78px;top:733.12px;font-size:8.30px;color:#222;transform:scaleX(0.9759);transform-origin:0 0;">- 122.16</span>
<span class="t" style="left:580.20px;top:733.12px;font-size:8.30px;color:#222;transform:scaleX(1.0425);transform-origin:0 0;">02/27/2024</span>
<span class="t" style="left:863.68px;top:733.12px;font-size:8.30px;color:#222;transform:scaleX(0.9759);transform-origin:0 0;">- 122.16</span>
<span class="t" style="left:1132.35px;top:732.59px;font-size:8.70px;color:#1a1a1a;transform:scaleX(0.9089);transform-origin:0 0;">Yes</span>
<span class="t" style="left:1223.95px;top:732.59px;font-size:8.70px;color:#fff;transform:scaleX(0.8973);transform-origin:0 0;">Closed</span>
<span class="t" style="left:256.78px;top:748.12px;font-size:8.30px;color:#222;transform:scaleX(0.9759);transform-origin:0 0;">12791</span>
<span class="t" style="left:327.46px;top:748.12px;font-size:8.30px;color:#222;transform:scaleX(0.9759);transform-origin:0 0;">2004105831</span>
<span class="t" style="left:405.20px;top:748.12px;font-size:8.30px;color:#222;transform:scaleX(1.0425);transform-origin:0 0;">02/27/2024</span>
<span class="t" style="left:522.73px;top:748.12px;font-size:8.30px;color:#222;transform:scaleX(0.9759);transform-origin:0 0;">391.62</span>
<span class="t" style="left:119.00px;top:762.42px;font-size:8.30px;color:#222;transform:scaleX(0.9759);transform-origin:0 0;">5390</span>
<span class="t" style="left:256.78px;top:762.42px;font-size:8.30px;color:#222;transform:scaleX(0.9759);transform-origin:0 0;">12791</span>
<span class="t" style="left:328.06px;top:762.42px;font-size:8.30px;color:#222;transform:scaleX(0.9759);transform-origin:0 0;">2004115491</span>
<span class="t" style="left:405.20px;top:762.42px;font-size:8.30px;color:#222;transform:scaleX(1.0425);transform-origin:0 0;">01/16/2024</span>
<span class="t" style="left:517.78px;top:762.42px;font-size:8.30px;color:#222;transform:scaleX(0.9759);transform-origin:0 0;">- 269.46</span>
<span class="t" style="left:580.20px;top:762.42px;font-size:8.30px;color:#222;transform:scaleX(1.0425);transform-origin:0 0;">03/05/2024</span>
<span class="t" style="left:863.68px;top:762.42px;font-size:8.30px;color:#222;transform:scaleX(0.9759);transform-origin:0 0;">- 269.46</span>
<span class="t" style="left:1132.35px;top:761.89px;font-size:8.70px;color:#1a1a1a;transform:scaleX(0.9089);transform-origin:0 0;">Yes</span>
<span class="t" style="left:1223.95px;top:761.89px;font-size:8.70px;color:#fff;transform:scaleX(0.8973);transform-origin:0 0;">Closed</span>
<span class="t" style="left:119.00px;top:777.82px;font-size:8.30px;color:#222;transform:scaleX(0.9759);transform-origin:0 0;">5393</span>
<span class="t" style="left:256.78px;top:777.82px;font-size:8.30px;color:#222;transform:scaleX(0.9759);transform-origin:0 0;">12791</span>
<span class="t" style="left:328.06px;top:777.82px;font-size:8.30px;color:#222;transform:scaleX(0.9759);transform-origin:0 0;">2004115491</span>
<span class="t" style="left:405.20px;top:777.82px;font-size:8.30px;color:#222;transform:scaleX(1.0425);transform-origin:0 0;">01/16/2024</span>
<span class="t" style="left:517.78px;top:777.82px;font-size:8.30px;color:#222;transform:scaleX(0.9759);transform-origin:0 0;">- 134.04</span>
<span class="t" style="left:580.20px;top:777.82px;font-size:8.30px;color:#222;transform:scaleX(1.0425);transform-origin:0 0;">03/05/2024</span>
<span class="t" style="left:863.68px;top:777.82px;font-size:8.30px;color:#222;transform:scaleX(0.9759);transform-origin:0 0;">- 134.04</span>
<span class="t" style="left:1132.35px;top:777.29px;font-size:8.70px;color:#1a1a1a;transform:scaleX(0.9089);transform-origin:0 0;">Yes</span>
<span class="t" style="left:1223.95px;top:777.29px;font-size:8.70px;color:#fff;transform:scaleX(0.8973);transform-origin:0 0;">Closed</span>
<span class="t" style="left:119.00px;top:793.02px;font-size:8.30px;color:#222;transform:scaleX(0.9759);transform-origin:0 0;">5395</span>
<span class="t" style="left:256.78px;top:793.02px;font-size:8.30px;color:#222;transform:scaleX(0.9759);transform-origin:0 0;">12791</span>
<span class="t" style="left:328.06px;top:793.02px;font-size:8.30px;color:#222;transform:scaleX(0.9759);transform-origin:0 0;">2004115491</span>
<span class="t" style="left:405.20px;top:793.02px;font-size:8.30px;color:#222;transform:scaleX(1.0425);transform-origin:0 0;">01/16/2024</span>
<span class="t" style="left:517.78px;top:793.02px;font-size:8.30px;color:#222;transform:scaleX(0.9759);transform-origin:0 0;">- 122.16</span>
<span class="t" style="left:580.20px;top:793.02px;font-size:8.30px;color:#222;transform:scaleX(1.0425);transform-origin:0 0;">03/05/2024</span>
<span class="t" style="left:863.68px;top:793.02px;font-size:8.30px;color:#222;transform:scaleX(0.9759);transform-origin:0 0;">- 122.16</span>
<span class="t" style="left:1132.35px;top:792.49px;font-size:8.70px;color:#1a1a1a;transform:scaleX(0.9089);transform-origin:0 0;">Yes</span>
<span class="t" style="left:1223.95px;top:792.49px;font-size:8.70px;color:#fff;transform:scaleX(0.8973);transform-origin:0 0;">Closed</span>
<span class="t" style="left:119.00px;top:807.22px;font-size:8.30px;color:#222;transform:scaleX(0.9759);transform-origin:0 0;">5396</span>
<span class="t" style="left:256.78px;top:807.22px;font-size:8.30px;color:#222;transform:scaleX(0.9759);transform-origin:0 0;">12791</span>
<span class="t" style="left:328.06px;top:807.22px;font-size:8.30px;color:#222;transform:scaleX(0.9759);transform-origin:0 0;">2004115491</span>
<span class="t" style="left:405.20px;top:807.22px;font-size:8.30px;color:#222;transform:scaleX(1.0425);transform-origin:0 0;">01/16/2024</span>
<span class="t" style="left:518.38px;top:807.22px;font-size:8.30px;color:#222;transform:scaleX(0.9759);transform-origin:0 0;">- 117.00</span>
<span class="t" style="left:580.20px;top:807.22px;font-size:8.30px;color:#222;transform:scaleX(1.0425);transform-origin:0 0;">03/05/2024</span>
<span class="t" style="left:864.28px;top:807.22px;font-size:8.30px;color:#222;transform:scaleX(0.9759);transform-origin:0 0;">- 117.00</span>
<span class="t" style="left:1132.35px;top:806.69px;font-size:8.70px;color:#1a1a1a;transform:scaleX(0.9089);transform-origin:0 0;">Yes</span>
<span class="t" style="left:1223.95px;top:806.69px;font-size:8.70px;color:#fff;transform:scaleX(0.8973);transform-origin:0 0;">Closed</span>
<span class="t" style="left:119.00px;top:821.12px;font-size:8.30px;color:#222;transform:scaleX(0.9759);transform-origin:0 0;">5397</span>
<span class="t" style="left:256.78px;top:821.12px;font-size:8.30px;color:#222;transform:scaleX(0.9759);transform-origin:0 0;">12791</span>
<span class="t" style="left:328.06px;top:821.12px;font-size:8.30px;color:#222;transform:scaleX(0.9759);transform-origin:0 0;">2004115491</span>
<span class="t" style="left:405.20px;top:821.12px;font-size:8.30px;color:#222;transform:scaleX(1.0425);transform-origin:0 0;">01/18/2024</span>
<span class="t" style="left:517.78px;top:821.12px;font-size:8.30px;color:#222;transform:scaleX(0.9759);transform-origin:0 0;">- 166.92</span>
<span class="t" style="left:580.20px;top:821.12px;font-size:8.30px;color:#222;transform:scaleX(1.0425);transform-origin:0 0;">03/05/2024</span>
<span class="t" style="left:863.68px;top:821.12px;font-size:8.30px;color:#222;transform:scaleX(0.9759);transform-origin:0 0;">- 166.92</span>
<span class="t" style="left:1132.35px;top:820.59px;font-size:8.70px;color:#1a1a1a;transform:scaleX(0.9089);transform-origin:0 0;">Yes</span>
<span class="t" style="left:1223.95px;top:820.59px;font-size:8.70px;color:#fff;transform:scaleX(0.8973);transform-origin:0 0;">Closed</span>
<span class="t" style="left:119.00px;top:835.97px;font-size:8.30px;color:#222;transform:scaleX(0.9759);transform-origin:0 0;">5398</span>
<span class="t" style="left:256.78px;top:835.97px;font-size:8.30px;color:#222;transform:scaleX(0.9759);transform-origin:0 0;">12791</span>
<span class="t" style="left:328.06px;top:835.97px;font-size:8.30px;color:#222;transform:scaleX(0.9759);transform-origin:0 0;">2004115491</span>
<span class="t" style="left:405.20px;top:835.97px;font-size:8.30px;color:#222;transform:scaleX(1.0425);transform-origin:0 0;">01/18/2024</span>
<span class="t" style="left:517.78px;top:835.97px;font-size:8.30px;color:#222;transform:scaleX(0.9759);transform-origin:0 0;">- 195.48</span>
<span class="t" style="left:580.20px;top:835.97px;font-size:8.30px;color:#222;transform:scaleX(1.0425);transform-origin:0 0;">03/05/2024</span>
<span class="t" style="left:863.68px;top:835.97px;font-size:8.30px;color:#222;transform:scaleX(0.9759);transform-origin:0 0;">- 195.48</span>
<span class="t" style="left:1132.35px;top:835.44px;font-size:8.70px;color:#1a1a1a;transform:scaleX(0.9089);transform-origin:0 0;">Yes</span>
<span class="t" style="left:1223.95px;top:835.44px;font-size:8.70px;color:#fff;transform:scaleX(0.8973);transform-origin:0 0;">Closed</span>
<span class="t" style="left:119.00px;top:851.17px;font-size:8.30px;color:#222;transform:scaleX(0.9759);transform-origin:0 0;">5399</span>
<span class="t" style="left:256.78px;top:851.17px;font-size:8.30px;color:#222;transform:scaleX(0.9759);transform-origin:0 0;">12791</span>
<span class="t" style="left:328.06px;top:851.17px;font-size:8.30px;color:#222;transform:scaleX(0.9759);transform-origin:0 0;">2004115491</span>
<span class="t" style="left:405.20px;top:851.17px;font-size:8.30px;color:#222;transform:scaleX(1.0425);transform-origin:0 0;">01/18/2024</span>
<span class="t" style="left:517.78px;top:851.17px;font-size:8.30px;color:#222;transform:scaleX(0.9759);transform-origin:0 0;">- 359.04</span>
<span class="t" style="left:580.20px;top:851.17px;font-size:8.30px;color:#222;transform:scaleX(1.0425);transform-origin:0 0;">03/05/2024</span>
<span class="t" style="left:863.68px;top:851.17px;font-size:8.30px;color:#222;transform:scaleX(0.9759);transform-origin:0 0;">- 359.04</span>
<span class="t" style="left:1132.35px;top:850.64px;font-size:8.70px;color:#1a1a1a;transform:scaleX(0.9089);transform-origin:0 0;">Yes</span>
<span class="t" style="left:1223.95px;top:850.64px;font-size:8.70px;color:#fff;transform:scaleX(0.8973);transform-origin:0 0;">Closed</span>
<span class="t" style="left:119.00px;top:866.07px;font-size:8.30px;color:#222;transform:scaleX(0.9759);transform-origin:0 0;">5400</span>
<span class="t" style="left:256.78px;top:866.07px;font-size:8.30px;color:#222;transform:scaleX(0.9759);transform-origin:0 0;">12791</span>
<span class="t" style="left:328.06px;top:866.07px;font-size:8.30px;color:#222;transform:scaleX(0.9759);transform-origin:0 0;">2004115491</span>
<span class="t" style="left:405.20px;top:866.07px;font-size:8.30px;color:#222;transform:scaleX(1.0425);transform-origin:0 0;">01/18/2024</span>
<span class="t" style="left:517.78px;top:866.07px;font-size:8.30px;color:#222;transform:scaleX(0.9759);transform-origin:0 0;">- 124.68</span>
<span class="t" style="left:580.20px;top:866.07px;font-size:8.30px;color:#222;transform:scaleX(1.0425);transform-origin:0 0;">03/05/2024</span>
<span class="t" style="left:863.68px;top:866.07px;font-size:8.30px;color:#222;transform:scaleX(0.9759);transform-origin:0 0;">- 124.68</span>
<span class="t" style="left:1132.35px;top:866.24px;font-size:8.70px;color:#1a1a1a;transform:scaleX(0.9089);transform-origin:0 0;">Yes</span>
<span class="t" style="left:1223.95px;top:866.24px;font-size:8.70px;color:#fff;transform:scaleX(0.8973);transform-origin:0 0;">Closed</span>
<span class="t" style="left:119.00px;top:879.22px;font-size:8.30px;color:#222;transform:scaleX(0.9759);transform-origin:0 0;">5412</span>
<span class="t" style="left:256.78px;top:879.22px;font-size:8.30px;color:#222;transform:scaleX(0.9759);transform-origin:0 0;">12791</span>
<span class="t" style="left:328.06px;top:879.22px;font-size:8.30px;color:#222;transform:scaleX(0.9759);transform-origin:0 0;">2004115491</span>
<span class="t" style="left:405.20px;top:879.22px;font-size:8.30px;color:#222;transform:scaleX(1.0425);transform-origin:0 0;">01/22/2024</span>
<span class="t" style="left:517.78px;top:879.22px;font-size:8.30px;color:#222;transform:scaleX(0.9759);transform-origin:0 0;">- 141.42</span>
<span class="t" style="left:580.20px;top:879.22px;font-size:8.30px;color:#222;transform:scaleX(1.0425);transform-origin:0 0;">03/05/2024</span>
<span class="t" style="left:863.68px;top:879.22px;font-size:8.30px;color:#222;transform:scaleX(0.9759);transform-origin:0 0;">- 141.42</span>
<span class="t" style="left:1132.35px;top:879.39px;font-size:8.70px;color:#1a1a1a;transform:scaleX(0.9089);transform-origin:0 0;">Yes</span>
<span class="t" style="left:1223.95px;top:879.39px;font-size:8.70px;color:#fff;transform:scaleX(0.8973);transform-origin:0 0;">Closed</span></div>
<svg class="abs" style="left:0;top:0" width="1818" height="950" viewBox="0 0 1818 950"><rect x="104.00" y="328.00" width="7.2" height="7.6" rx="0.6" fill="#707070"/><rect x="104.00" y="328.00" width="7.2" height="6.9" rx="0.6" fill="#fff"/><path d="M105.70 330.40 l1.9 2.4 l1.9 -2.4" fill="none" stroke="#555" stroke-width="0.8"/><rect x="186.30" y="328.00" width="7.2" height="7.6" rx="0.6" fill="#707070"/><rect x="186.30" y="328.00" width="7.2" height="6.9" rx="0.6" fill="#fff"/><path d="M188.00 330.40 l1.9 2.4 l1.9 -2.4" fill="none" stroke="#555" stroke-width="0.8"/><rect x="271.30" y="328.00" width="7.2" height="7.6" rx="0.6" fill="#707070"/><rect x="271.30" y="328.00" width="7.2" height="6.9" rx="0.6" fill="#fff"/><path d="M273.00 330.40 l1.9 2.4 l1.9 -2.4" fill="none" stroke="#555" stroke-width="0.8"/><rect x="364.50" y="328.00" width="7.2" height="7.6" rx="0.6" fill="#707070"/><rect x="364.50" y="328.00" width="7.2" height="6.9" rx="0.6" fill="#fff"/><path d="M366.20 330.40 l1.9 2.4 l1.9 -2.4" fill="none" stroke="#555" stroke-width="0.8"/><rect x="440.50" y="328.00" width="7.2" height="7.6" rx="0.6" fill="#707070"/><rect x="440.50" y="328.00" width="7.2" height="6.9" rx="0.6" fill="#fff"/><path d="M442.20 330.40 l1.9 2.4 l1.9 -2.4" fill="none" stroke="#555" stroke-width="0.8"/><rect x="539.50" y="328.00" width="7.2" height="7.6" rx="0.6" fill="#707070"/><rect x="539.50" y="328.00" width="7.2" height="6.9" rx="0.6" fill="#fff"/><path d="M541.20 330.40 l1.9 2.4 l1.9 -2.4" fill="none" stroke="#555" stroke-width="0.8"/><rect x="615.50" y="328.00" width="7.2" height="7.6" rx="0.6" fill="#707070"/><rect x="615.50" y="328.00" width="7.2" height="6.9" rx="0.6" fill="#fff"/><path d="M617.20 330.40 l1.9 2.4 l1.9 -2.4" fill="none" stroke="#555" stroke-width="0.8"/><rect x="782.40" y="328.00" width="7.2" height="7.6" rx="0.6" fill="#707070"/><rect x="782.40" y="328.00" width="7.2" height="6.9" rx="0.6" fill="#fff"/><path d="M784.10 330.40 l1.9 2.4 l1.9 -2.4" fill="none" stroke="#555" stroke-width="0.8"/><rect x="885.40" y="328.00" width="7.2" height="7.6" rx="0.6" fill="#707070"/><rect x="885.40" y="328.00" width="7.2" height="6.9" rx="0.6" fill="#fff"/><path d="M887.10 330.40 l1.9 2.4 l1.9 -2.4" fill="none" stroke="#555" stroke-width="0.8"/><rect x="1044.60" y="328.00" width="7.2" height="7.6" rx="0.6" fill="#707070"/><rect x="1044.60" y="328.00" width="7.2" height="6.9" rx="0.6" fill="#fff"/><path d="M1046.30 330.40 l1.9 2.4 l1.9 -2.4" fill="none" stroke="#555" stroke-width="0.8"/><rect x="1147.40" y="328.00" width="7.2" height="7.6" rx="0.6" fill="#707070"/><rect x="1147.40" y="328.00" width="7.2" height="6.9" rx="0.6" fill="#fff"/><path d="M1149.10 330.40 l1.9 2.4 l1.9 -2.4" fill="none" stroke="#555" stroke-width="0.8"/><rect x="1251.00" y="328.00" width="7.2" height="7.6" rx="0.6" fill="#707070"/><rect x="1251.00" y="328.00" width="7.2" height="6.9" rx="0.6" fill="#fff"/><path d="M1252.70 330.40 l1.9 2.4 l1.9 -2.4" fill="none" stroke="#555" stroke-width="0.8"/><rect x="1354.00" y="328.00" width="7.2" height="7.6" rx="0.6" fill="#707070"/><rect x="1354.00" y="328.00" width="7.2" height="6.9" rx="0.6" fill="#fff"/><path d="M1355.70 330.40 l1.9 2.4 l1.9 -2.4" fill="none" stroke="#555" stroke-width="0.8"/><rect x="1457.60" y="328.00" width="7.2" height="7.6" rx="0.6" fill="#707070"/><rect x="1457.60" y="328.00" width="7.2" height="6.9" rx="0.6" fill="#fff"/><path d="M1459.30 330.40 l1.9 2.4 l1.9 -2.4" fill="none" stroke="#555" stroke-width="0.8"/><rect x="1560.50" y="328.00" width="7.2" height="7.6" rx="0.6" fill="#707070"/><rect x="1560.50" y="328.00" width="7.2" height="6.9" rx="0.6" fill="#fff"/><path d="M1562.20 330.40 l1.9 2.4 l1.9 -2.4" fill="none" stroke="#555" stroke-width="0.8"/><rect x="1807.50" y="328.00" width="7.2" height="7.6" rx="0.6" fill="#707070"/><rect x="1807.50" y="328.00" width="7.2" height="6.9" rx="0.6" fill="#fff"/><path d="M1809.20 330.40 l1.9 2.4 l1.9 -2.4" fill="none" stroke="#555" stroke-width="0.8"/></svg>
<svg class="abs" style="left:0;top:0" width="1818" height="950" viewBox="0 0 1818 950"><path d="M23 22 H11.2 M16.6 16.4 L11 22 L16.6 27.6" fill="none" stroke="#9b9b9b" stroke-width="1.7"/><path d="M49 22 H60.8 M55.4 16.4 L61 22 L55.4 27.6" fill="none" stroke="#9b9b9b" stroke-width="1.7"/><path d="M99.9 23.9 A5.3 5.3 0 1 1 98.7 18.3" fill="none" stroke="#222" stroke-width="1.9"/><path d="M101.5 15.3 v5.3 h-5.3z" fill="#222"/><rect x="124.5" y="4" width="1556.5" height="37" rx="18.5" fill="#dfdfdf"/><circle cx="143" cy="22.3" r="13" fill="#fff"/><circle cx="138.5" cy="18.9" r="2.05" fill="none" stroke="#2a2a2a" stroke-width="1.6"/><path d="M143 18.9 h5.7 M136.8 26.5 h6.6" stroke="#2a2a2a" stroke-width="1.6"/><circle cx="146.6" cy="26.5" r="2.05" fill="none" stroke="#2a2a2a" stroke-width="1.6"/><circle cx="1618.4" cy="20.4" r="5.6" fill="none" stroke="#4a4a4a" stroke-width="1.6"/><path d="M1622.4 24.6 L1627.6 29.8" stroke="#4a4a4a" stroke-width="1.8"/><path d="M1615.6 20.4 h5.6 M1618.4 17.6 v5.6" stroke="#4a4a4a" stroke-width="1.4"/><path d="M1655.3 15.4 l2.3 5.2 l5.6 0.5 l-4.3 3.7 l1.3 5.5 l-4.9 -3 l-4.9 3 l1.3 -5.5 l-4.3 -3.7 l5.6 -0.5z" fill="none" stroke="#4a4a4a" stroke-width="1.5" stroke-linejoin="round"/><path d="M1704.6 15.6 h13 a1.3 1.3 0 0 1 1.3 1.3 v9 h-11 l-3.3 3.6 h-1.3 v-12.6 a1.3 1.3 0 0 1 1.3 -1.3z" fill="#fff" stroke="#2f78c4" stroke-width="1.3"/><path d="M1709.8 18.2 l0.9 2.4 l2.4 0.9 l-2.4 0.9 l-0.9 2.400 l-0.900 -2.400 l-2.400 -0.900 l2.400 -0.900z" fill="#e0333c"/><rect x="1714.200" y="19.600" width="1.100" height="2" fill="#2f78c4"/><rect x="1711" y="23" width="15.8" height="15.8" rx="3.2" fill="#e32228"/><rect x="1717.7" y="26.6" width="2.2" height="6" fill="#fff"/><rect x="1717.7" y="34" width="2.2" height="2.1" fill="#fff"/><path d="M1745.6 15.6 c-1.6 0.8 -2 2.4 -1.4 4.2 c1.6 4.6 5.2 8.6 9.6 10.4 c1.6 0.6 3.2 0.2 4 -1.2 l0.6 -1.2 c0.3 -0.6 0.1 -1.2 -0.4 -1.5 l-2.8 -1.7 c-0.5 -0.3 -1.1 -0.2 -1.5 0.2 l-1.1 1.1 c-1.9 -1 -3.5 -2.7 -4.5 -4.6 l1.1 -1.1 c0.4 -0.4 0.5 -1 0.2 -1.5 l-1.6 -2.8 c-0.3 -0.5 -0.9 -0.7 -1.5 -0.4z" fill="none" stroke="#9a9a9a" stroke-width="1.3"/><path d="M1752 16 a6 6 0 0 1 6 6 M1752 18.8 a3.2 3.2 0 0 1 3.2 3.2" fill="none" stroke="#9a9a9a" stroke-width="1.1"/><path d="M1784.9 15.9 H1795.4 A1.5 1.5 0 0 1 1796.9 17.4 V27.9 A1.5 1.5 0 0 1 1795.4 29.4 H1784.9 A1.5 1.5 0 0 1 1783.4 27.900 V25.200 A2.400 2.400 0 0 0 1783.400 20.400 V17.400 A1.500 1.500 0 0 1 1784.900 15.900 Z" fill="none" stroke="#202124" stroke-width="2" stroke-linejoin="round"/><path d="M1787.9 15.300 a2.100 2.100 0 0 1 4.200 0z M1797.500 20.700 a2.100 2.100 0 0 1 0 4.200z" fill="#202124"/><rect x="6.6" y="55.2" width="5.6" height="5.6" fill="none" stroke="#2b2b2b" stroke-width="1.9"/><rect x="15.2" y="55.2" width="5.6" height="5.6" fill="none" stroke="#2b2b2b" stroke-width="1.9"/><rect x="6.6" y="63.8" width="5.6" height="5.6" fill="none" stroke="#2b2b2b" stroke-width="1.9"/><rect x="15.2" y="63.8" width="5.6" height="5.6" fill="none" stroke="#2b2b2b" stroke-width="1.9"/><rect x="37.8" y="54" width="2" height="17.6" rx="1" fill="#fbd9c9"/><rect x="1767" y="54" width="2" height="17.6" rx="1" fill="#fbd9c9"/><path d="M59.7 56.8 h5.2 l2 2.2 h7.6 a1.3 1.3 0 0 1 1.3 1.3 v8.4 a1.3 1.3 0 0 1 -1.3 1.3 h-14.8 a1.3 1.3 0 0 1 -1.3 -1.3 v-10.6 a1.3 1.3 0 0 1 1.3 -1.3z" fill="none" stroke="#474747" stroke-width="1.8" stroke-linejoin="round"/><path d="M129.7 56.8 h5.2 l2 2.2 h7.6 a1.3 1.3 0 0 1 1.3 1.3 v8.4 a1.3 1.3 0 0 1 -1.3 1.3 h-14.8 a1.3 1.3 0 0 1 -1.3 -1.3 v-10.6 a1.3 1.3 0 0 1 1.3 -1.3z" fill="none" stroke="#474747" stroke-width="1.8" stroke-linejoin="round"/><path d="M360.7 56.8 h5.2 l2 2.2 h7.6 a1.3 1.3 0 0 1 1.3 1.3 v8.4 a1.3 1.3 0 0 1 -1.3 1.3 h-14.8 a1.3 1.3 0 0 1 -1.3 -1.3 v-10.6 a1.3 1.3 0 0 1 1.3 -1.3z" fill="none" stroke="#474747" stroke-width="1.8" stroke-linejoin="round"/><path d="M437.7 56.8 h5.2 l2 2.2 h7.6 a1.3 1.3 0 0 1 1.3 1.3 v8.4 a1.3 1.3 0 0 1 -1.3 1.3 h-14.8 a1.3 1.3 0 0 1 -1.3 -1.3 v-10.6 a1.3 1.3 0 0 1 1.3 -1.3z" fill="none" stroke="#474747" stroke-width="1.8" stroke-linejoin="round"/><path d="M765.1 56.8 h5.2 l2 2.2 h7.6 a1.3 1.3 0 0 1 1.3 1.3 v8.4 a1.3 1.3 0 0 1 -1.3 1.3 h-14.8 a1.3 1.3 0 0 1 -1.3 -1.3 v-10.6 a1.3 1.3 0 0 1 1.3 -1.3z" fill="none" stroke="#474747" stroke-width="1.8" stroke-linejoin="round"/><path d="M1789.1 56.8 h5.2 l2 2.2 h7.6 a1.3 1.3 0 0 1 1.3 1.3 v8.4 a1.3 1.3 0 0 1 -1.3 1.3 h-14.8 a1.3 1.3 0 0 1 -1.3 -1.3 v-10.6 a1.3 1.3 0 0 1 1.3 -1.3z" fill="none" stroke="#474747" stroke-width="1.8" stroke-linejoin="round"/><g transform="translate(221 62.9)"><g transform="rotate(90)"><path d="M-0.9 -7.9 L-4.5 -4.2 L2.2 -4.2z" fill="#3b78c9"/><path d="M0.6 -3.6 H2.9 V1.7" fill="none" stroke="#3b78c9" stroke-width="1.9"/></g><g transform="rotate(180)"><path d="M-0.9 -7.9 L-4.5 -4.2 L2.2 -4.2z" fill="#f8b828"/><path d="M0.6 -3.6 H2.9 V1.7" fill="none" stroke="#f8b828" stroke-width="1.9"/></g><g transform="rotate(-90)"><path d="M-0.9 -7.9 L-4.5 -4.2 L2.2 -4.2z" fill="#e8414a"/><path d="M0.6 -3.6 H2.9 V1.7" fill="none" stroke="#e8414a" stroke-width="1.9"/></g><g transform="rotate(0)"><path d="M-0.9 -7.9 L-4.5 -4.2 L2.2 -4.2z" fill="#2fa65a"/><path d="M0.6 -3.6 H2.9 V1.7" fill="none" stroke="#2fa65a" stroke-width="1.9"/></g></g><g transform="translate(527.6 62.8)" fill="none" stroke="#3c3c3c" stroke-width="1.35"><ellipse rx="7" ry="3.4" transform="rotate(30)"/><ellipse rx="7" ry="3.4" transform="rotate(90)"/><ellipse rx="7" ry="3.4" transform="rotate(150)"/></g><g transform="translate(593.4 54.6)"><path d="M0.9 3 a1.6 1.6 0 0 1 1.6 -1.6 h3.6 l1.8 1.8 h6.6 a1.6 1.6 0 0 1 1.600 1.600 v9 a1.600 1.600 0 0 1 -1.600 1.600 h-12 a1.600 1.600 0 0 1 -1.600 -1.600z" fill="#eef4fd" stroke="#3b82d8" stroke-width="1.400"/><path d="M4.600 13.400 v-2.600 M7.400 13.400 v-4 M10.200 13.400 v-3.200 M13 13.400 v-5.600" stroke="#1f57a8" stroke-width="1.900"/><path d="M4.200 8.800 l3.200 -2 l2.800 1 l3.200 -2.400" fill="none" stroke="#1f57a8" stroke-width="1.100"/></g><rect x="0" y="84.9" width="1818" height="1.1" fill="#d0d0d0"/><rect x="0" y="86" width="1818" height="58" fill="#fff"/><rect x="0" y="86" width="132" height="58" fill="#089949"/><g fill="none" stroke="#fff" stroke-width="1.5" stroke-linejoin="round" stroke-linecap="round"><path d="M29 124.6 H13.4 a2 2 0 0 1 -2 -2 V104 a2 2 0 0 1 2 -2 H32.6 a2 2 0 0 1 2 2 V117"/><path d="M11.4 109.6 H34.6 M19.2 102 V124.6"/><path d="M30 119.6 L38.8 123 L32.6 127.8 Z"/></g><path d="M731.6 107.2 l2.5 5.4 l5.9 0.6 l-4.5 3.9 l1.3 5.8 l-5.2 -3.1 l-5.2 3.1 l1.3 -5.8 l-4.5 -3.9 l5.9 -0.6z" fill="none" stroke="#333" stroke-width="1.3" stroke-linejoin="round"/><path d="M751.6 112 v-3.6 a1.8 1.8 0 0 1 1.8 -1.8 h4.6 l2 1.8 h8 a1.8 1.8 0 0 1 1.8 1.8 v1.8z" fill="#74dca4"/><path d="M751.6 112.2 h18.2 v8.4 a1.6 1.6 0 0 1 -1.6 1.6 h-15 a1.6 1.6 0 0 1 -1.6 -1.6z" fill="#fff" stroke="#555" stroke-width="1.3"/><rect x="1424.8" y="96.8" width="226.4" height="36.4" rx="5" fill="#f2f2f2"/><circle cx="1442.6" cy="113.6" r="4.9" fill="none" stroke="#222" stroke-width="1.6"/><path d="M1446.2 117.4 l4.2 4.4" stroke="#222" stroke-width="1.7"/><path d="M1452.8 113.4 h6.2 l-3.1 3.4z" fill="#222"/><rect x="1671.6" y="96.6" width="115.4" height="36.8" rx="4.5" fill="#eef8f1" stroke="#089949" stroke-width="1.3"/><g fill="#089949"><circle cx="1688.6" cy="109.6" r="3.9"/><path d="M1680.6 123.2 v-2.4 c0 -3.2 3.6 -5 8 -5 c4.400 0 8 1.800 8 5 v2.400z"/><circle cx="1697.4" cy="110.8" r="2.9"/><path d="M1698 115.400 c3.200 0.200 5 1.800 5 4.200 v2.400 h-4.600 v-1.600 c0 -2 -0.800 -3.600 -2.400 -4.600 c0.600 -0.200 1.300 -0.400 2 -0.400z"/></g><path d="M1767.60 112.00 l4.50 4.60 l4.50 -4.60" fill="none" stroke="#089949" stroke-width="1.40"/><circle cx="1827" cy="115" r="11" fill="none" stroke="#222" stroke-width="1.6"/><rect x="0" y="144" width="1818" height="34" fill="#f8f8f8"/><rect x="132" y="143.6" width="1686" height="1.2" fill="#e6e6e6"/><rect x="0" y="178" width="1818" height="47" fill="#fff"/><rect x="0" y="224.8" width="1818" height="1.2" fill="#e2e2e2"/><rect x="2.6" y="236.4" width="90" height="33" rx="5" fill="#fafafa" stroke="#e6e6e6" stroke-width="1.1"/><path d="M74.6 250.6 h8 l-4 4.600z" fill="#777"/><rect x="136.4" y="236.4" width="1700" height="33" rx="5" fill="#f8f8f8" stroke="#e6e6e6" stroke-width="1.1"/><g fill="none" stroke="#1f1f1f" stroke-width="1.5" stroke-linejoin="round"><path d="M16 199.4 v-3 a1.400 1.400 0 0 1 1.400 -1.400 h7.400 a1.400 1.400 0 0 1 1.400 1.400 v3"/><rect x="12.600" y="199.400" width="17" height="8.400" rx="2.600"/><rect x="16" y="204.200" width="10.200" height="6" rx="1.600" fill="#fff"/></g><rect x="17.8" y="206" width="6.6" height="2.6" rx="0.8" fill="#3d8be6"/><path d="M51.600 198.600 h8.600 a4.900 4.900 0 0 1 0 9.800 h-6" fill="none" stroke="#1f1f1f" stroke-width="1.500"/><path d="M55.800 194.600 l-4.400 4 l4.400 4" fill="none" stroke="#1f1f1f" stroke-width="1.500"/><path d="M99 198.600 h-8.600 a4.900 4.900 0 0 0 0 9.800 h6" fill="none" stroke="#a4a4a4" stroke-width="1.500"/><path d="M94.800 194.600 l4.400 4 l-4.400 4" fill="none" stroke="#a4a4a4" stroke-width="1.500"/><rect x="119" y="193.200" width="13.600" height="5.400" rx="2.700" fill="#3d8be6"/><path d="M132.600 196 h1.400 a1.800 1.800 0 0 1 1.800 1.800 v2 a1.800 1.800 0 0 1 -1.800 1.800 h-5 a1.800 1.800 0 0 0 -1.800 1.800 v1.600" fill="none" stroke="#1f1f1f" stroke-width="1.500"/><rect x="124.800" y="204.800" width="4.800" height="7.400" rx="2.400" fill="none" stroke="#1f1f1f" stroke-width="1.500"/><g transform="translate(164.600 201.600) rotate(-40)"><rect x="-7.8" y="-4.700" width="15.600" height="9.400" rx="1.800" fill="#fff" stroke="#1f1f1f" stroke-width="1.500"/><path d="M-2.2 -4.700 h8.200 a1.800 1.800 0 0 1 1.800 1.800 v5.800 a1.800 1.800 0 0 1 -1.800 1.800 h-8.200z" fill="#e0566c" stroke="#1f1f1f" stroke-width="1.500"/></g><path d="M162.600 210.400 h10.600" stroke="#1f1f1f" stroke-width="1.500"/><path d="M181.00 199.40 l4.70 4.60 l4.70 -4.60" fill="none" stroke="#8a8a8a" stroke-width="1.30"/><rect x="207.400" y="185.200" width="144.600" height="33.200" rx="5" fill="#fff" stroke="#ececec" stroke-width="1.200"/><path d="M329.80 198.80 l5.00 5.00 l5.00 -5.00" fill="none" stroke="#777" stroke-width="1.30"/><rect x="355.400" y="185.200" width="72.300" height="33.200" rx="5" fill="#fff" stroke="#ececec" stroke-width="1.200"/><path d="M410.80 198.80 l5.00 5.00 l5.00 -5.00" fill="none" stroke="#777" stroke-width="1.30"/><path d="M479.600 195.200 h9.800 M476.400 209.400 h9.800 M486 195.200 l-4.800 14.200" fill="none" stroke="#1f1f1f" stroke-width="1.500"/><path d="M523.400 197.400 c-0.800 -2 -2.600 -2.900 -5 -2.900 c-3 0 -5 1.500 -5 3.700 c0 1.600 1 2.700 3 3.400 M513 206 c0.700 2.300 2.600 3.500 5.400 3.500 c3.200 0 5.400 -1.500 5.400 -3.900 c0 -1.400 -0.700 -2.500 -2.100 -3.200" fill="none" stroke="#1f1f1f" stroke-width="1.500"/><path d="M510.800 202 h15.200" stroke="#1f1f1f" stroke-width="1.400"/><path d="M545.400 207.800 l6.600 -14.800 l6.600 14.800 M548 202.600 h8" fill="none" stroke="#1f1f1f" stroke-width="1.500"/><rect x="541" y="211" width="22" height="4" fill="#e00b0b"/><path d="M572.00 199.40 l4.70 4.60 l4.70 -4.60" fill="none" stroke="#8a8a8a" stroke-width="1.30"/><g transform="translate(607.2 201.9) rotate(45)"><rect x="-4.400" y="-4.400" width="8.800" height="8.800" rx="1.400" fill="#fff" stroke="#1f1f1f" stroke-width="1.500"/><path d="M-3.600 3.600 L3.600 -3.600 v5.800 a1.400 1.400 0 0 1 -1.400 1.400z" fill="#9a9a9a"/><rect x="-4.400" y="-4.400" width="8.800" height="8.800" rx="1.400" fill="none" stroke="#1f1f1f" stroke-width="1.500"/></g><g transform="translate(604.9 196.3) rotate(-45)"><rect x="-1.700" y="-3.300" width="3.400" height="6.600" rx="1.700" fill="none" stroke="#1f1f1f" stroke-width="1.300"/></g><path d="M614.700 204.600 c1.400 1.900 2.100 3.100 2.100 4.100 a2.100 2.100 0 0 1 -4.200 0 c0 -1 0.700 -2.200 2.100 -4.100z" fill="#fff" stroke="#1f1f1f" stroke-width="1.300"/><rect x="597" y="211" width="22" height="4" fill="#ffff00"/><path d="M628.40 199.40 l4.70 4.60 l4.70 -4.60" fill="none" stroke="#8a8a8a" stroke-width="1.30"/><rect x="652.05" y="193.15" width="1.5" height="1.5" fill="#222"/><rect x="656.25" y="193.15" width="1.5" height="1.5" fill="#222"/><rect x="660.45" y="193.15" width="1.5" height="1.5" fill="#222"/><rect x="664.55" y="193.15" width="1.5" height="1.5" fill="#222"/><rect x="668.85" y="193.15" width="1.5" height="1.5" fill="#222"/><rect x="652.05" y="197.25" width="1.5" height="1.5" fill="#222"/><rect x="660.45" y="197.25" width="1.5" height="1.5" fill="#222"/><rect x="668.85" y="197.25" width="1.5" height="1.5" fill="#222"/><rect x="652.05" y="201.35" width="1.5" height="1.5" fill="#222"/><rect x="656.25" y="201.35" width="1.5" height="1.5" fill="#222"/><rect x="660.45" y="201.35" width="1.5" height="1.5" fill="#222"/><rect x="664.55" y="201.35" width="1.5" height="1.5" fill="#222"/><rect x="668.85" y="201.35" width="1.5" height="1.5" fill="#222"/><rect x="652.05" y="205.45" width="1.5" height="1.5" fill="#222"/><rect x="660.45" y="205.45" width="1.5" height="1.5" fill="#222"/><rect x="668.85" y="205.45" width="1.5" height="1.5" fill="#222"/><path d="M652 210.400 h18.400" stroke="#1f1f1f" stroke-width="1.500"/><path d="M680.40 199.40 l4.70 4.60 l4.70 -4.60" fill="none" stroke="#8a8a8a" stroke-width="1.30"/><g fill="none" stroke="#9a9a9a" stroke-width="1.300"><rect x="703.400" y="193.400" width="17.400" height="17.400" rx="2.400"/><path d="M703.400 198 h17.400 M703.400 206.200 h17.400 M709.200 193.400 v4.600 M715 193.400 v4.600 M709.200 206.200 v4.600 M715 206.200 v4.600"/></g><path d="M707 202.100 h10.200 M709.400 199.800 l-2.600 2.300 l2.600 2.300 M714.800 199.800 l2.600 2.300 l-2.600 2.300" fill="none" stroke="#6cc99a" stroke-width="1.300"/><path d="M731.00 199.40 l4.70 4.60 l4.70 -4.60" fill="none" stroke="#c4c4c4" stroke-width="1.30"/><path d="M762 195.200 h15.200 M762 199.900 h9.400 M762 204.600 h15.200 M762 209.300 h9.400" stroke="#1f1f1f" stroke-width="1.500"/><path d="M786.40 199.40 l4.70 4.60 l4.70 -4.60" fill="none" stroke="#777" stroke-width="1.30"/><path d="M814.800 201.800 h15" stroke="#1f1f1f" stroke-width="1.500"/><path d="M822.300 192 v6.600 M819.200 195.800 l3.100 3 l3.100 -3 M822.300 211.800 v-6.600 M819.200 208 l3.100 -3 l3.100 3" fill="none" stroke="#3d8be6" stroke-width="1.400"/><path d="M839.40 199.40 l4.70 4.60 l4.70 -4.60" fill="none" stroke="#777" stroke-width="1.30"/><path d="M866.800 195.200 h15 M874.800 199.900 h7 M874.800 204.600 h7 M866.800 209.300 h15" stroke="#1f1f1f" stroke-width="1.500"/><path d="M865.400 202.200 h7.600 M870.200 199.200 l3 3 l-3 3" fill="none" stroke="#3d8be6" stroke-width="1.400"/><path d="M893.00 199.40 l4.70 4.60 l4.70 -4.60" fill="none" stroke="#777" stroke-width="1.30"/><path d="M918 195.200 h16.400 M918 199.900 h13 M918 204.600 h6 M918 209.300 h5" stroke="#1f1f1f" stroke-width="1.500"/><path d="M931 199.900 a3.300 3.300 0 0 1 0 7.600 h-4.600 M929 204.800 l-2.800 2.700 l2.800 2.700" fill="none" stroke="#3d8be6" stroke-width="1.400"/><path d="M943.40 199.40 l4.70 4.60 l4.70 -4.60" fill="none" stroke="#777" stroke-width="1.30"/><path d="M971.400 208 c4 3.600 10.800 2.600 14.400 -2.600 c2 -3 2.400 -6 1.800 -9 M983.600 198.600 l3.600 -3 l2.400 4" fill="none" stroke="#3d8be6" stroke-width="1.400"/><path d="M996.40 199.40 l4.70 4.60 l4.70 -4.60" fill="none" stroke="#777" stroke-width="1.30"/><rect x="1025.600" y="185.200" width="119.600" height="33.200" rx="5" fill="#fff" stroke="#ececec" stroke-width="1.200"/><path d="M1122.40 198.80 l5.00 5.00 l5.00 -5.00" fill="none" stroke="#777" stroke-width="1.30"/><path d="M1182.60 199.40 l4.70 4.60 l4.70 -4.60" fill="none" stroke="#8a8a8a" stroke-width="1.30"/><path d="M1246 209.300 h13.600 M1249.400 206.500 l-3.200 2.800 l3.200 2.800" fill="none" stroke="#e25d6e" stroke-width="1.400"/><path d="M1281 209.300 h13.600 M1291.200 206.500 l3.200 2.800 l-3.200 2.800" fill="none" stroke="#1fa052" stroke-width="1.400"/><rect x="1319.600" y="193.400" width="17" height="6.200" rx="1.200" fill="#a9cdf6" stroke="#3d8be6" stroke-width="1.200"/><path d="M1324.600 193.600 v6 M1330.600 193.600 v6" stroke="#3d8be6" stroke-width="1.200"/><path d="M1319.600 199.600 v9.200 a1.600 1.600 0 0 0 1.600 1.600 h5.200 M1319.600 205 h8.400 M1324.600 199.600 v10.800 M1330.600 199.600 v4.400 M1336.600 199.600 v2" fill="none" stroke="#1f1f1f" stroke-width="1.500"/><path d="M1337.800 203.200 l-4.400 5.400 M1330 211.800 c1.400 0.400 3 -0.400 3.400 -2.400" fill="none" stroke="#3d8be6" stroke-width="1.800"/><path d="M1345.40 199.40 l4.70 4.60 l4.70 -4.60" fill="none" stroke="#777" stroke-width="1.30"/><rect x="1377.700" y="193.500" width="17.200" height="17.200" rx="2.200" fill="#fff" stroke="#1f1f1f" stroke-width="1.500"/><path d="M1383.400 193.500 v17.200 M1389.200 193.500 v17.200 M1377.700 199.200 h17.200 M1377.700 205 h17.200" stroke="#1f1f1f" stroke-width="1.500"/><path d="M1394.900 199.200 v-3.500 a2.200 2.200 0 0 0 -2.200 -2.200 h-12.800 a2.200 2.200 0 0 0 -2.200 2.200 v12.800 a2.200 2.200 0 0 0 2.200 2.200 h3.500 v-11.500z M1383.400 193.500 v5.700 M1389.200 193.500 v5.700 M1377.700 199.200 h5.700 M1377.700 205 h5.700" fill="none" stroke="#1a9a4b" stroke-width="1.600"/><path d="M1403.40 199.40 l4.70 4.60 l4.70 -4.60" fill="none" stroke="#777" stroke-width="1.30"/><rect x="1431.400" y="199.400" width="4" height="8.600" rx="1.400" fill="#2eb25c"/><rect x="1437" y="193" width="4.200" height="15" rx="1.400" fill="#3d8be6"/><rect x="1442.800" y="200.800" width="4" height="7.200" rx="1.400" fill="#f28a1e"/><path d="M1430 210.400 h18.200" stroke="#1f1f1f" stroke-width="1.400"/><rect x="1466.600" y="194.800" width="17" height="14.600" rx="2.400" fill="#fff" stroke="#1f1f1f" stroke-width="1.500"/><path d="M1468 207.800 v-2.600 l3.600 -3.600 l3.400 3 l3 -2.400 l4.200 3.800 v1.800z" fill="#7ccf8a"/><circle cx="1478.200" cy="199" r="1.300" fill="#f5b400"/><path d="M1491.80 199.40 l4.70 4.60 l4.70 -4.60" fill="none" stroke="#777" stroke-width="1.30"/><path d="M1540.400 193.400 v16.400 M1537 206.600 l3.400 3.400 l3.400 -3.400" fill="none" stroke="#f28a1e" stroke-width="1.400"/><path d="M1552.00 199.40 l4.70 4.60 l4.70 -4.60" fill="none" stroke="#777" stroke-width="1.30"/><rect x="1571.200" y="185.200" width="48.800" height="33.400" rx="5" fill="#ebebeb"/><ellipse cx="1586.200" cy="196.400" rx="9.200" ry="3" fill="#bcd7f7" stroke="#3d8be6" stroke-width="1.200"/><path d="M1577.400 197.600 l6.600 7.200 v4.200 l4.600 1.400 v-5.600 l6.400 -7.200" fill="none" stroke="#1f1f1f" stroke-width="1.500" stroke-linejoin="round"/><path d="M1604.80 199.40 l4.70 4.60 l4.70 -4.60" fill="none" stroke="#777" stroke-width="1.30"/><path d="M1644 197.400 v-1.600 a1.800 1.800 0 0 0 -1.800 -1.800 h-9 a1.400 1.400 0 0 0 -1 2.400 l5 5.400 l-5 5.400 a1.400 1.400 0 0 0 1 2.400 h9 a1.800 1.800 0 0 0 1.800 -1.800 v-1.600" fill="none" stroke="#1f1f1f" stroke-width="1.600"/><path d="M1656.80 199.40 l4.70 4.60 l4.70 -4.60" fill="none" stroke="#777" stroke-width="1.30"/><rect x="2.500" y="894.800" width="1816" height="18" fill="#f7f7f7"/><path d="M57.700 899.500 v9.200 l-7.600 -4.600z" fill="#c4c4c4"/><rect x="65" y="899" width="1375" height="9.200" rx="4.600" fill="#c1c1c1"/><rect x="2.500" y="912.600" width="1816" height="38" fill="#f0f0f0"/><rect x="2.500" y="912.600" width="37.800" height="38" fill="#e9e9e9"/><rect x="2.500" y="912.200" width="1816" height="1" fill="#e4e4e4"/><rect x="40.2" y="913" width="1.100" height="37" fill="#e2e2e2"/><rect x="133.2" y="913" width="1.100" height="37" fill="#e2e2e2"/><rect x="658.4" y="913" width="1.100" height="37" fill="#e2e2e2"/><rect x="1133.3" y="913" width="1.100" height="37" fill="#e2e2e2"/><rect x="1486.7" y="913" width="1.100" height="37" fill="#e2e2e2"/><rect x="1537.6" y="913" width="1.100" height="37" fill="#e2e2e2"/><rect x="1587.7" y="913" width="1.100" height="37" fill="#e2e2e2"/><rect x="1649.3" y="913" width="1.100" height="37" fill="#e2e2e2"/><rect x="1699.2" y="913" width="1.100" height="37" fill="#e2e2e2"/><rect x="1140.200" y="928" width="1.200" height="16" fill="#d6d6d6"/><path d="M22.700 923.200 c5 0 9 3 9 6.800 c0 3.800 -4 6.800 -9 6.800 c-1 0 -2 -0.100 -2.900 -0.400 l-4.900 3 l1 -4.600 c-1.400 -1.200 -2.200 -2.900 -2.200 -4.800 c0 -3.800 4 -6.800 9 -6.800z" fill="none" stroke="#222" stroke-width="1.500" stroke-linejoin="round"/><circle cx="19.3" cy="930" r="1.100" fill="#2e8fb0"/><circle cx="22.7" cy="930" r="1.100" fill="#2e8fb0"/><circle cx="26.1" cy="930" r="1.100" fill="#2e8fb0"/><path d="M56.800 935.900 l7.200 -8 l7.200 8z" fill="#1a1a1a"/><circle cx="102.800" cy="933" r="11" fill="#089949"/><path d="M96.600 933 h12.400 M102.800 926.800 v12.400" stroke="#fff" stroke-width="2.600"/><path d="M272.500 913 c4 0 6 2 6 6 v19 a6 6 0 0 0 6 6 h125 a6 6 0 0 0 6 -6 v-19 c0 -4 2 -6 6 -6z" fill="#fff"/><path d="M278.500 919 v19 a6 6 0 0 0 6 6 h125 a6 6 0 0 0 6 -6 v-19" fill="none" stroke="#e0e0e0" stroke-width="1"/><path d="M292.600 919.200 h13.600 a2.600 2.600 0 0 1 2.600 2.600 v11.600 a2.600 2.600 0 0 1 -2.600 2.600 h-12.600 l-3.600 3.200 v-17.400 a2.600 2.600 0 0 1 2.600 -2.600z" fill="#111"/><path d="M392.800 926.200 h10.400 l-5.200 6z" fill="#8a8a8a"/><circle cx="356" cy="953.8" r="6.200" fill="#f01c24"/><g fill="none" stroke="#1f1f1f" stroke-width="1.400"><circle cx="1511.400" cy="930.200" r="3.600"/><path d="M1504 939.400 c0 -3 3 -5 7 -5 c1.400 0 2.600 0.200 3.600 0.600 M1504 939.400 c0 1.800 3 2.800 7 2.800 c4 0 7.400 -1 7.400 -2.800 c0 -1.800 -1.400 -3.400 -3.600 -4.400"/><ellipse cx="1516.600" cy="927.400" rx="4.600" ry="3.200" fill="#f0f0f0"/></g><path d="M1514.400 927.400 h4.400" stroke="#555" stroke-width="1" stroke-dasharray="1 0.700"/><rect x="1552" y="925.600" width="20.400" height="14.600" rx="2.400" fill="none" stroke="#1f1f1f" stroke-width="1.500"/><path d="M1555.600 929.6 h14" stroke="#444" stroke-width="1.300" stroke-dasharray="1.400 2.800"/><path d="M1555.600 933.0 h14" stroke="#444" stroke-width="1.300" stroke-dasharray="1.400 2.800"/><path d="M1558.600 936.800 h7.200" stroke="#1f1f1f" stroke-width="1.500"/><rect x="1601.600" y="924.600" width="17.400" height="17.400" rx="2.600" fill="#fff" stroke="#1f1f1f" stroke-width="1.600"/><path d="M1610.300 924.600 v17.400 M1601.600 933.300 h17.400" stroke="#9a9a9a" stroke-width="3.400"/><path d="M1601.600 931.600 h7 v-7 M1612 924.600 v7 h7 M1619 935 h-7 v7 M1608.600 942 v-7 h-7" fill="none" stroke="#1f1f1f" stroke-width="1.500"/><path d="M1630.200 931.800 h8 l-4 4.400z" fill="#8a8a8a"/><rect x="1665.600" y="924.600" width="17.400" height="17.400" rx="2.600" fill="none" stroke="#1f1f1f" stroke-width="1.600"/><path d="M1674.300 927.800 l2.400 2.600 h-4.800z M1674.300 938.800 l2.400 -2.600 h-4.800z M1668.800 933.300 l2.600 -2.400 v4.800z M1679.800 933.300 l-2.600 -2.400 v4.800z" fill="#1f1f1f"/><rect x="1716.200" y="931.400" width="9.600" height="2.800" rx="0.600" fill="#444"/><rect x="1741.800" y="918" width="71.400" height="40" rx="5" fill="#fff" stroke="#e4e4e4" stroke-width="1"/><rect x="1794" y="918" width="1" height="32" fill="#e4e4e4"/><path d="M1799.40 930.60 l4.70 4.80 l4.70 -4.80" fill="none" stroke="#222" stroke-width="1.40"/></svg>
<span class="t" style="left:165.00px;top:12.83px;font-size:15.80px;color:#1f1f1f;letter-spacing:-0.445px;">sheet.zoho.com</span>
<span class="t" style="left:270.30px;top:12.83px;font-size:15.80px;color:#5a5a5a;letter-spacing:-0.213px;">/sheet/open/mzmlb799fecee8e12452a9d338769f2858476?sheetid=0&amp;range=A1</span>
<span class="t" style="left:85.00px;top:52.88px;font-size:13.90px;color:#1f1f1f;letter-spacing:-0.577px;">App</span>
<span class="t" style="left:155.00px;top:52.88px;font-size:13.90px;color:#1f1f1f;letter-spacing:-0.608px;">Portals</span>
<span class="t" style="left:385.00px;top:52.88px;font-size:13.90px;color:#1f1f1f;letter-spacing:-0.420px;">Zoho</span>
<span class="t" style="left:462.00px;top:52.88px;font-size:13.90px;color:#1f1f1f;letter-spacing:-0.879px;">Sheets</span>
<span class="t" style="left:790.00px;top:52.88px;font-size:13.90px;color:#1f1f1f;letter-spacing:-0.343px;">Product</span>
<span class="t" style="left:1811.50px;top:52.88px;font-size:13.90px;color:#1f1f1f;">A</span>
<span class="t" style="left:236.00px;top:52.88px;font-size:13.90px;color:#1f1f1f;letter-spacing:-0.258px;">Accounting Inbox</span>
<span class="t" style="left:542.00px;top:52.88px;font-size:13.90px;color:#1f1f1f;letter-spacing:-1.778px;">CGPT</span>
<span class="t" style="left:616.50px;top:52.88px;font-size:13.90px;color:#1f1f1f;letter-spacing:-0.603px;">Accounts Receivabl...</span>
<span class="t" style="left:50.60px;top:104.67px;font-size:22.30px;color:#fff;letter-spacing:0.045px;-webkit-text-stroke:0.35px #fff;">Sheet</span>
<span class="t" style="left:153.00px;top:104.99px;font-size:15.90px;color:#000;font-weight:700;letter-spacing:0.510px;">12791 - Natural Grocers by Vitamin Cottage Retail Stores - AR Tra...</span>
<span class="t" style="left:780.00px;top:105.00px;font-size:15.00px;color:#9a9a9a;letter-spacing:-0.349px;">Saved at 11:26:10 AM</span>
<span class="t" style="left:1469.00px;top:104.73px;font-size:15.20px;color:#666;letter-spacing:-0.299px;">Search in this sheet</span>
<span class="t" style="left:1710.40px;top:104.29px;font-size:18.20px;color:#089949;font-weight:700;letter-spacing:-0.716px;">Share</span>
<span class="t" style="left:13.00px;top:150.65px;font-size:16.60px;color:#111;letter-spacing:-0.187px;-webkit-text-stroke:0.3px #111;">File</span>
<span class="t" style="left:70.00px;top:150.65px;font-size:16.60px;color:#111;letter-spacing:-0.276px;-webkit-text-stroke:0.3px #111;">Edit</span>
<span class="t" style="left:129.00px;top:150.65px;font-size:16.60px;color:#111;letter-spacing:0.080px;-webkit-text-stroke:0.3px #111;">View</span>
<span class="t" style="left:196.50px;top:150.65px;font-size:16.60px;color:#111;letter-spacing:0.165px;-webkit-text-stroke:0.3px #111;">Insert</span>
<span class="t" style="left:270.00px;top:150.65px;font-size:16.60px;color:#111;letter-spacing:-0.011px;-webkit-text-stroke:0.3px #111;">Format</span>
<span class="t" style="left:354.00px;top:150.65px;font-size:16.60px;color:#111;letter-spacing:-0.266px;-webkit-text-stroke:0.3px #111;">Data</span>
<span class="t" style="left:419.00px;top:150.65px;font-size:16.60px;color:#111;letter-spacing:-0.155px;-webkit-text-stroke:0.3px #111;">Review</span>
<span class="t" style="left:503.00px;top:150.65px;font-size:16.60px;color:#111;letter-spacing:-0.050px;-webkit-text-stroke:0.3px #111;">Tools</span>
<span class="t" style="left:572.00px;top:150.65px;font-size:16.60px;color:#111;letter-spacing:0.215px;-webkit-text-stroke:0.3px #111;">Help</span>
<span class="t" style="left:29.90px;top:243.16px;font-size:12.80px;color:#222;letter-spacing:-0.228px;">A1</span>
<span class="t" style="left:109.60px;top:244.88px;font-size:24.00px;color:#222;">f</span>
<span class="t" style="left:116.00px;top:247.76px;font-size:16.00px;color:#222;">x</span>
<span class="t" style="left:222.00px;top:190.83px;font-size:15.80px;color:#111;letter-spacing:0.542px;">Roboto</span>
<span class="t" style="left:362.60px;top:190.83px;font-size:15.80px;color:#111;letter-spacing:-0.486px;">10</span>
<span class="t" style="left:439.40px;top:192.78px;font-size:21.40px;color:#1f1f1f;letter-spacing:0.326px;-webkit-text-stroke:0.5px #1f1f1f;">B</span>
<span class="t" style="left:970.60px;top:189.88px;font-size:14.20px;color:#1f1f1f;-webkit-text-stroke:0.2px #1f1f1f;">A</span>
<span class="t" style="left:1033.00px;top:190.83px;font-size:15.80px;color:#111;letter-spacing:-0.115px;">General</span>
<span class="t" style="left:1158.60px;top:192.05px;font-size:16.60px;color:#1f1f1f;-webkit-text-stroke:0.4px #1f1f1f;">$</span>
<span class="t" style="left:1207.40px;top:191.26px;font-size:16.00px;color:#1f1f1f;letter-spacing:1.300px;-webkit-text-stroke:0.4px #1f1f1f;">(,)</span>
<span class="t" style="left:1242.00px;top:188.90px;font-size:12.40px;color:#1f1f1f;letter-spacing:0.455px;">.00</span>
<span class="t" style="left:1278.00px;top:188.90px;font-size:12.40px;color:#1f1f1f;letter-spacing:0.455px;">.00</span>
<span class="t" style="left:1527.20px;top:187.66px;font-size:10.80px;color:#1f1f1f;font-weight:700;transform:scaleX(0.84);transform-origin:0 0;">A</span>
<span class="t" style="left:1527.40px;top:196.86px;font-size:10.80px;color:#1f1f1f;font-weight:700;transform:scaleX(0.88);transform-origin:0 0;">Z</span>
<span class="t" style="left:153.00px;top:919.39px;font-size:15.60px;color:#111;letter-spacing:-0.347px;">AR tracker 2026</span>
<span class="t" style="left:294.50px;top:917.77px;font-size:12.20px;color:#fff;font-weight:700;letter-spacing:-1.148px;">11</span>
<span class="t" style="left:316.00px;top:919.46px;font-size:15.40px;color:#111;font-weight:700;letter-spacing:-0.832px;">AR Tracker</span>
<span class="t" style="left:435.00px;top:919.39px;font-size:15.60px;color:#111;letter-spacing:-0.309px;">Adjustments made for 2707.22</span>
<span class="t" style="left:1752.80px;top:923.34px;font-size:14.60px;color:#111;letter-spacing:0.326px;">50%</span>
</body></html>
